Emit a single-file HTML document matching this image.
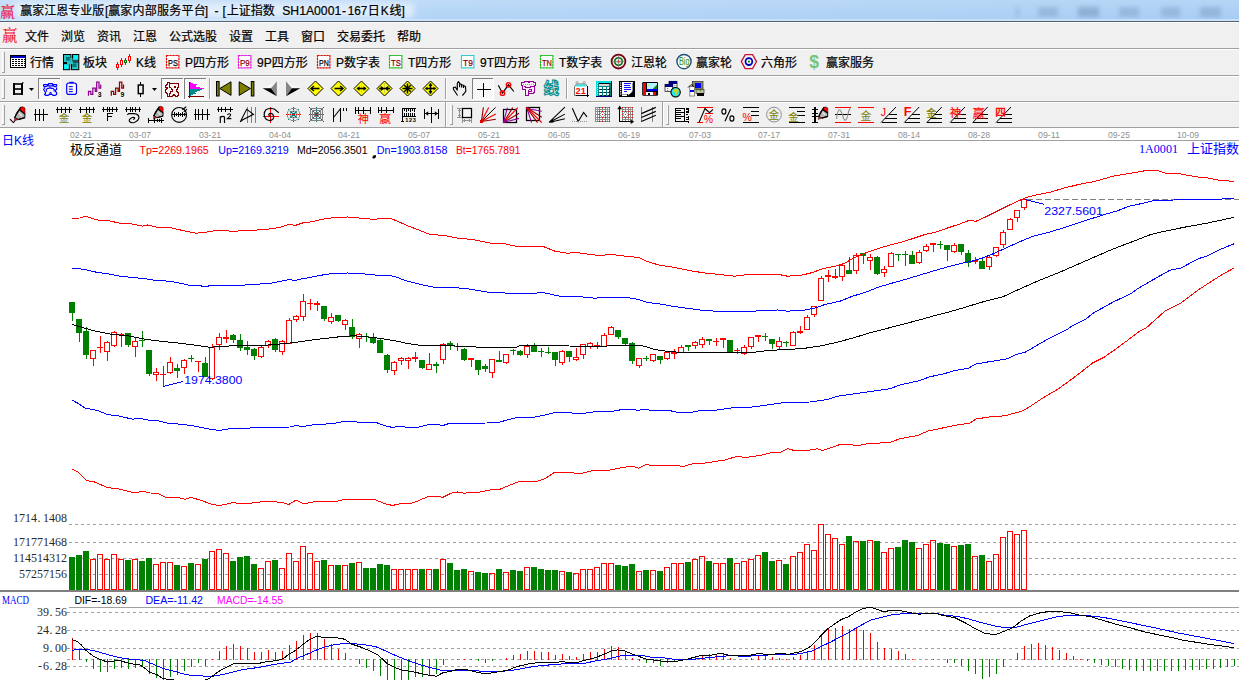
<!DOCTYPE html>
<html><head><meta charset="utf-8"><title>chart</title>
<style>html,body{margin:0;padding:0;background:#fff;overflow:hidden}svg{display:block;font-family:"Liberation Sans","Noto Sans CJK SC",sans-serif}</style></head>
<body><svg width="1239" height="680" viewBox="0 0 1239 680">
<rect x="0" y="0" width="1239" height="680" fill="#fff"/>
<defs><linearGradient id="tg" x1="0" x2="1" y1="0" y2="0"><stop offset="0" stop-color="#bcd9f7"/><stop offset="0.35" stop-color="#b1d3f6"/><stop offset="1" stop-color="#a6ccf3"/></linearGradient><linearGradient id="tv" x1="0" x2="0" y1="0" y2="1"><stop offset="0" stop-color="#fff" stop-opacity="0.18"/><stop offset="1" stop-color="#fff" stop-opacity="0"/></linearGradient><filter id="bl" x="-30%" y="-80%" width="160%" height="260%"><feGaussianBlur stdDeviation="2.1"/></filter><filter id="gl" x="-10%" y="-60%" width="120%" height="220%"><feGaussianBlur stdDeviation="3"/></filter><pattern id="dith" width="2" height="2" patternUnits="userSpaceOnUse"><rect width="2" height="2" fill="#fff"/><rect width="1" height="1" fill="#f0f0f0"/><rect x="1" y="1" width="1" height="1" fill="#f0f0f0"/></pattern></defs>
<rect x="0" y="0" width="1239" height="21" fill="url(#tg)"/>
<rect x="0" y="0" width="1239" height="21" fill="url(#tv)"/>
<rect x="14" y="3" width="400" height="15" fill="#fff" opacity="0.55" filter="url(#gl)"/>
<rect x="1015" y="7" width="5" height="10" fill="#6f8fb5" opacity="0.22" filter="url(#bl)"/>
<rect x="1038" y="7" width="20" height="10" fill="#6f8fb5" opacity="0.36" filter="url(#bl)"/>
<rect x="1078" y="7" width="21" height="10" fill="#6f8fb5" opacity="0.5" filter="url(#bl)"/>
<rect x="1119" y="7" width="20" height="10" fill="#6f8fb5" opacity="0.36" filter="url(#bl)"/>
<rect x="1161" y="7" width="19" height="10" fill="#6f8fb5" opacity="0.36" filter="url(#bl)"/>
<rect x="1200" y="7" width="21" height="10" fill="#6f8fb5" opacity="0.4" filter="url(#bl)"/>
<rect x="0" y="19" width="1239" height="2" fill="#d6e8fa" opacity="0.7"/>
<rect x="0" y="21" width="1239" height="1" fill="#55626f"/>
<rect x="0" y="22" width="1239" height="1" fill="#fbfbfb"/>
<rect x="0" y="23" width="1239" height="105" fill="#f0f0f0"/>
<rect x="0" y="48" width="1239" height="1" fill="#a0a0a0"/>
<rect x="0" y="49" width="1239" height="1" fill="#fff"/>
<rect x="0" y="75" width="1239" height="1" fill="#a0a0a0"/>
<rect x="0" y="76" width="1239" height="1" fill="#fff"/>
<rect x="0" y="101" width="1239" height="1" fill="#a0a0a0"/>
<rect x="0" y="102" width="1239" height="1" fill="#fff"/>
<rect x="0" y="127" width="1239" height="1" fill="#a0a0a0"/>
<text x="0" y="16.5" font-size="15" font-family="'Liberation Serif','Noto Serif CJK SC',serif" fill="#f0001c">赢</text>
<text x="20.14" y="15.3" font-size="12" fill="#000" stroke="#000" stroke-width="0.2">赢家江恩专业版</text>
<text x="105.03" y="15.3" font-size="12" fill="#000" stroke="#000" stroke-width="0.2">[</text>
<text x="108.14" y="15.3" font-size="12" letter-spacing="0.24" fill="#000" stroke="#000" stroke-width="0.2">赢家内部服务平台</text>
<text x="204.79" y="15.3" font-size="12" fill="#000" stroke="#000" stroke-width="0.2">]</text>
<text x="214.45" y="15.3" font-size="12" fill="#000" stroke="#000" stroke-width="0.2">-</text>
<text x="222.53" y="15.3" font-size="12" fill="#000" stroke="#000" stroke-width="0.2">[</text>
<text x="226.69" y="15.3" font-size="12" fill="#000" stroke="#000" stroke-width="0.2">上证指数</text>
<text x="282.22" y="15.3" font-size="12" fill="#000" stroke="#000" stroke-width="0.2" textLength="59" lengthAdjust="spacingAndGlyphs">SH1A0001</text>
<text x="342.05" y="15.3" font-size="12" fill="#000" stroke="#000" stroke-width="0.2">-</text>
<text x="347.84" y="15.3" font-size="12" fill="#000" stroke="#000" stroke-width="0.2" textLength="19.5" lengthAdjust="spacingAndGlyphs">167</text>
<text x="367.79" y="15.3" font-size="12" fill="#000" stroke="#000" stroke-width="0.2">日</text>
<text x="380.79" y="15.3" font-size="12" fill="#000" stroke="#000" stroke-width="0.2">K</text>
<text x="389.44" y="15.3" font-size="12" fill="#000" stroke="#000" stroke-width="0.2">线</text>
<text x="401.59" y="15.3" font-size="12" fill="#000" stroke="#000" stroke-width="0.2">]</text>
<text x="2" y="41" font-size="15.5" font-family="'Liberation Serif','Noto Serif CJK SC',serif" fill="#f0001c">赢</text>
<text x="25" y="40.8" font-size="12" fill="#000" stroke="#000" stroke-width="0.2">文件</text>
<text x="61" y="40.8" font-size="12" fill="#000" stroke="#000" stroke-width="0.2">浏览</text>
<text x="97" y="40.8" font-size="12" fill="#000" stroke="#000" stroke-width="0.2">资讯</text>
<text x="133" y="40.8" font-size="12" fill="#000" stroke="#000" stroke-width="0.2">江恩</text>
<text x="169" y="40.8" font-size="12" fill="#000" stroke="#000" stroke-width="0.2">公式选股</text>
<text x="229" y="40.8" font-size="12" fill="#000" stroke="#000" stroke-width="0.2">设置</text>
<text x="265" y="40.8" font-size="12" fill="#000" stroke="#000" stroke-width="0.2">工具</text>
<text x="301" y="40.8" font-size="12" fill="#000" stroke="#000" stroke-width="0.2">窗口</text>
<text x="337" y="40.8" font-size="12" fill="#000" stroke="#000" stroke-width="0.2">交易委托</text>
<text x="397" y="40.8" font-size="12" fill="#000" stroke="#000" stroke-width="0.2">帮助</text>
<rect x="2" y="52" width="1" height="20" fill="#fff"/><rect x="4" y="52" width="1" height="20" fill="#a0a0a0"/><rect x="2" y="72" width="3" height="1" fill="#a0a0a0"/>
<rect x="2" y="79" width="1" height="19" fill="#fff"/><rect x="4" y="79" width="1" height="19" fill="#a0a0a0"/><rect x="2" y="98" width="3" height="1" fill="#a0a0a0"/>
<rect x="2" y="105" width="1" height="19" fill="#fff"/><rect x="4" y="105" width="1" height="19" fill="#a0a0a0"/><rect x="2" y="124" width="3" height="1" fill="#a0a0a0"/>
<text x="30" y="67.3" font-size="12" fill="#000" stroke="#000" stroke-width="0.2">行情</text>
<rect x="10" y="55" width="16" height="13" fill="#000" shape-rendering="crispEdges"/><rect x="11" y="56" width="14" height="2" fill="#0000c8" shape-rendering="crispEdges"/><rect x="11" y="58" width="14" height="9" fill="#fff" shape-rendering="crispEdges"/><rect x="12" y="59" width="2" height="1" fill="#000" shape-rendering="crispEdges"/><rect x="15" y="59" width="2" height="1" fill="#000" shape-rendering="crispEdges"/><rect x="18" y="59" width="2" height="1" fill="#000" shape-rendering="crispEdges"/><rect x="21" y="59" width="2" height="1" fill="#000" shape-rendering="crispEdges"/><rect x="12" y="61" width="2" height="1" fill="#000" shape-rendering="crispEdges"/><rect x="15" y="61" width="2" height="1" fill="#000" shape-rendering="crispEdges"/><rect x="18" y="61" width="2" height="1" fill="#000" shape-rendering="crispEdges"/><rect x="21" y="61" width="2" height="1" fill="#000" shape-rendering="crispEdges"/><rect x="12" y="63" width="2" height="1" fill="#000" shape-rendering="crispEdges"/><rect x="15" y="63" width="2" height="1" fill="#000" shape-rendering="crispEdges"/><rect x="18" y="63" width="2" height="1" fill="#000" shape-rendering="crispEdges"/><rect x="21" y="63" width="2" height="1" fill="#000" shape-rendering="crispEdges"/><rect x="12" y="65" width="2" height="1" fill="#000" shape-rendering="crispEdges"/><rect x="15" y="65" width="2" height="1" fill="#000" shape-rendering="crispEdges"/><rect x="18" y="65" width="2" height="1" fill="#000" shape-rendering="crispEdges"/><rect x="21" y="65" width="2" height="1" fill="#000" shape-rendering="crispEdges"/><rect x="24" y="59" width="1" height="1" fill="#000" shape-rendering="crispEdges"/><rect x="24" y="61" width="1" height="1" fill="#000" shape-rendering="crispEdges"/><rect x="24" y="63" width="1" height="1" fill="#000" shape-rendering="crispEdges"/><rect x="24" y="65" width="1" height="1" fill="#000" shape-rendering="crispEdges"/>
<text x="83" y="67.3" font-size="12" fill="#000" stroke="#000" stroke-width="0.2">板块</text>
<rect x="63.5" y="54.5" width="7.5" height="8" fill="#28c4c8" stroke="#000" stroke-width="1"/><rect x="66" y="57" width="3.8" height="3.6" fill="#007878" /><rect x="72.5" y="54.5" width="6.3" height="6.5" fill="#28c4c8" stroke="#000" stroke-width="1"/><rect x="74.2" y="55.3" width="3.8" height="3.5" fill="#00ffff" /><rect x="63.5" y="63.5" width="6.3" height="6.2" fill="#28c4c8" stroke="#000" stroke-width="1"/><rect x="64.3" y="65" width="3.8" height="3.9" fill="#00ffff" /><rect x="71.5" y="62" width="7.3" height="7.7" fill="#28c4c8" stroke="#000" stroke-width="1"/><rect x="72.2" y="63.3" width="4.2" height="3.8" fill="#007878" /><rect x="70.3" y="58" width="2.2" height="5" fill="#28c4c8" /><rect x="67" y="61.6" width="6" height="2.6" fill="#28c4c8" />
<text x="136" y="67.3" font-size="12" fill="#000" stroke="#000" stroke-width="0.2">K线</text>
<rect x="117" y="62" width="1" height="8" fill="#ff0000" shape-rendering="crispEdges"/><rect x="116.5" y="64.5" width="2" height="3" fill="#fff" stroke="#ff0000" shape-rendering="crispEdges"/><rect x="121" y="58" width="1" height="9" fill="#ff0000" shape-rendering="crispEdges"/><rect x="120.5" y="60.5" width="2" height="4" fill="#fff" stroke="#ff0000" shape-rendering="crispEdges"/><rect x="125" y="58" width="1" height="7" fill="#008000" shape-rendering="crispEdges"/><rect x="124.5" y="60.5" width="2" height="2" fill="#fff" stroke="#008000" shape-rendering="crispEdges"/><rect x="129" y="54" width="1" height="9" fill="#ff0000" shape-rendering="crispEdges"/><rect x="128.5" y="56.5" width="2" height="4" fill="#fff" stroke="#ff0000" shape-rendering="crispEdges"/>
<text x="185" y="67.3" font-size="12" fill="#000" stroke="#000" stroke-width="0.2">P四方形</text>
<rect x="166" y="55" width="13.4" height="13.4" fill="#fff" /><rect x="166.5" y="55.5" width="12.4" height="12.4" fill="none" stroke="#ff0000" stroke-width="1.2" stroke-dasharray="2.2,0.8"/><rect x="166.5" y="55.5" width="12.4" height="12.4" fill="none" stroke="#202020" stroke-width="1" stroke-dasharray="0.8,2.2" stroke-dashoffset="-2.2" opacity="0.55"/><text x="172.89999999999998" y="65.5" font-size="9.5" text-anchor="middle" fill="#000" stroke="#000" stroke-width="0.25" textLength="9.8" lengthAdjust="spacingAndGlyphs">PS</text>
<text x="257" y="67.3" font-size="12" fill="#000" stroke="#000" stroke-width="0.2">9P四方形</text>
<rect x="238" y="55" width="13.4" height="13.4" fill="#fff" /><rect x="238.5" y="55.5" width="12.4" height="12.4" fill="none" stroke="#ff00ff" stroke-width="1.2" stroke-dasharray="2.2,0.8"/><rect x="238.5" y="55.5" width="12.4" height="12.4" fill="none" stroke="#202020" stroke-width="1" stroke-dasharray="0.8,2.2" stroke-dashoffset="-2.2" opacity="0.55"/><text x="244.89999999999998" y="65.5" font-size="9.5" text-anchor="middle" fill="#900000" stroke="#900000" stroke-width="0.25" textLength="9.8" lengthAdjust="spacingAndGlyphs">P9</text>
<text x="336" y="67.3" font-size="12" fill="#000" stroke="#000" stroke-width="0.2">P数字表</text>
<rect x="317" y="55" width="13.4" height="13.4" fill="#fff" /><rect x="317.5" y="55.5" width="12.4" height="12.4" fill="none" stroke="#ff0000" stroke-width="1.2" stroke-dasharray="2.2,0.8"/><rect x="317.5" y="55.5" width="12.4" height="12.4" fill="none" stroke="#202020" stroke-width="1" stroke-dasharray="0.8,2.2" stroke-dashoffset="-2.2" opacity="0.55"/><text x="323.9" y="65.5" font-size="9.5" text-anchor="middle" fill="#000" stroke="#000" stroke-width="0.25" textLength="9.8" lengthAdjust="spacingAndGlyphs">PN</text>
<text x="408" y="67.3" font-size="12" fill="#000" stroke="#000" stroke-width="0.2">T四方形</text>
<rect x="389" y="55" width="13.4" height="13.4" fill="#fff" /><rect x="389.5" y="55.5" width="12.4" height="12.4" fill="none" stroke="#00d000" stroke-width="1.2" stroke-dasharray="2.2,0.8"/><rect x="389.5" y="55.5" width="12.4" height="12.4" fill="none" stroke="#202020" stroke-width="1" stroke-dasharray="0.8,2.2" stroke-dashoffset="-2.2" opacity="0.55"/><text x="395.9" y="65.5" font-size="9.5" text-anchor="middle" fill="#900000" stroke="#900000" stroke-width="0.25" textLength="9.8" lengthAdjust="spacingAndGlyphs">TS</text>
<text x="480" y="67.3" font-size="12" fill="#000" stroke="#000" stroke-width="0.2">9T四方形</text>
<rect x="461" y="55" width="13.4" height="13.4" fill="#fff" /><rect x="461.5" y="55.5" width="12.4" height="12.4" fill="none" stroke="#00e0e0" stroke-width="1.2" stroke-dasharray="2.2,0.8"/><rect x="461.5" y="55.5" width="12.4" height="12.4" fill="none" stroke="#202020" stroke-width="1" stroke-dasharray="0.8,2.2" stroke-dashoffset="-2.2" opacity="0.55"/><text x="467.9" y="65.5" font-size="9.5" text-anchor="middle" fill="#900000" stroke="#900000" stroke-width="0.25" textLength="9.8" lengthAdjust="spacingAndGlyphs">T9</text>
<text x="559" y="67.3" font-size="12" fill="#000" stroke="#000" stroke-width="0.2">T数字表</text>
<rect x="540" y="55" width="13.4" height="13.4" fill="#fff" /><rect x="540.5" y="55.5" width="12.4" height="12.4" fill="none" stroke="#00d000" stroke-width="1.2" stroke-dasharray="2.2,0.8"/><rect x="540.5" y="55.5" width="12.4" height="12.4" fill="none" stroke="#202020" stroke-width="1" stroke-dasharray="0.8,2.2" stroke-dashoffset="-2.2" opacity="0.55"/><text x="546.9000000000001" y="65.5" font-size="9.5" text-anchor="middle" fill="#900000" stroke="#900000" stroke-width="0.25" textLength="9.8" lengthAdjust="spacingAndGlyphs">TN</text>
<text x="631" y="67.3" font-size="12" fill="#000" stroke="#000" stroke-width="0.2">江恩轮</text>
<circle cx="618.5" cy="61.6" r="6.9" stroke="#7a0018" fill="#f0f0f0" stroke-width="1.8" /><circle cx="618.5" cy="61.6" r="3.8" stroke="#007000" fill="#e8e8e8" stroke-width="1.6" /><line x1="612" y1="61.6" x2="625" y2="61.6" stroke="#808080" stroke-width="0.8" /><line x1="618.5" y1="55" x2="618.5" y2="68" stroke="#808080" stroke-width="0.8" /><circle cx="618.5" cy="61.6" r="1.2" stroke="none" fill="#e04040" stroke-width="1" />
<text x="696" y="67.3" font-size="12" fill="#000" stroke="#000" stroke-width="0.2">赢家轮</text>
<circle cx="684" cy="61.6" r="7.1" stroke="#1f4e79" fill="#fff" stroke-width="1.4" /><text x="684.2" y="65.4" font-size="11.5" text-anchor="middle" fill="#209020" textLength="10.6" lengthAdjust="spacingAndGlyphs">Big</text>
<text x="761" y="67.3" font-size="12" fill="#000" stroke="#000" stroke-width="0.2">六角形</text>
<polygon points="741.3,61.6 745.2,54.6 752.6,54.6 756.5,61.6 752.6,68.6 745.2,68.6" fill="#f4f4f4" stroke="#c8102e" stroke-width="1.3" /><circle cx="748.9" cy="61.6" r="3.4" stroke="#0000c0" fill="#fff" stroke-width="1.8" /><circle cx="748.9" cy="61.6" r="1.1" stroke="none" fill="#008000" stroke-width="1" />
<text x="826" y="67.3" font-size="12" fill="#000" stroke="#000" stroke-width="0.2">赢家服务</text>
<text x="814" y="68.3" font-size="17.5" font-weight="bold" text-anchor="middle" fill="#78c478">$</text>
<rect x="13" y="83" width="2" height="12" fill="#000" shape-rendering="crispEdges"/><rect x="21" y="83" width="2" height="12" fill="#000" shape-rendering="crispEdges"/><rect x="13" y="83.2" width="10" height="1.6" fill="#000" /><rect x="13" y="88.2" width="10" height="1.6" fill="#000" /><rect x="13" y="93.2" width="10" height="1.6" fill="#000" /><rect x="22" y="82.3" width="1.6" height="1" fill="#000" /><polygon points="29,88 34,88 31.5,91" fill="#000" stroke="none" stroke-width="1" /><rect x="38" y="78" width="23" height="22" fill="url(#dith)" shape-rendering="crispEdges"/><rect x="38" y="78" width="23" height="1" fill="#808080" shape-rendering="crispEdges"/><rect x="38" y="78" width="1" height="22" fill="#808080" shape-rendering="crispEdges"/><rect x="38" y="99" width="23" height="1" fill="#fff" shape-rendering="crispEdges"/><rect x="60" y="78" width="1" height="22" fill="#fff" shape-rendering="crispEdges"/><path d="M43.6,86.6 V84.6 H48.5 V83.6 H52.5 V84.6 H56.6 V86.6 M43.6,86.6 H46 L47.5,85.8 H53 L54.5,86.6 H56.6 M45,87.6 L43.6,89.5 L45.5,92.5 V93.5 L44.5,94.5 L46,95.4 H48.2 L49.2,94.4 H52 L53,95.4 H55 L56.6,94.4 V92.5 L55.5,91.5 V90 L56.6,89.4 V87.6 M46.6,91.6 L46.2,89.6 L47.6,88.3 H49 L50,87.3 L51,88.3 H53 L54.2,89.6 V91.6 M49.4,93.4 L50.5,92.4 L51.6,93.4" fill="none" stroke="#0000ff" stroke-width="1.15" stroke-linejoin="round"/><rect x="66.7" y="83" width="9.8" height="11.4" rx="2.2" fill="#fffff0" stroke="#0000ff" stroke-width="1.2"/><rect x="69.3" y="81.8" width="4.5" height="1.6" fill="#0000ff" /><line x1="68.8" y1="86.6" x2="72.8" y2="86.6" stroke="#0000ff" stroke-width="1.1" /><line x1="68.8" y1="89.2" x2="72.8" y2="89.2" stroke="#0000ff" stroke-width="1.1" /><line x1="68.8" y1="91.6" x2="72.8" y2="91.6" stroke="#0000ff" stroke-width="1.1" /><polyline points="88.5,95.7 88.5,91.3 90.8,91.3 90.8,94.4 92.8,94.4 92.8,88.1 95.3,88.1 95.3,91.3 96.7,91.3 96.7,82.2 99.0,82.2 99.0,88.1 100.7,88.1 100.7,84.5" stroke="#900090" fill="none" stroke-width="1.25" /><text x="97.7" y="96.7" font-size="6.5" fill="#000" font-weight="bold" textLength="3.8" lengthAdjust="spacingAndGlyphs">3</text><polyline points="111.3,95.7 111.3,91.3 113.6,91.3 113.6,94.4 115.6,94.4 115.6,88.1 118.1,88.1 118.1,91.3 119.5,91.3 119.5,82.2 121.8,82.2 121.8,88.1 123.5,88.1 123.5,84.5" stroke="#900000" fill="none" stroke-width="1.25" /><text x="120.5" y="96.7" font-size="6.5" fill="#000" font-weight="bold" textLength="3.8" lengthAdjust="spacingAndGlyphs">9</text><rect x="140" y="82" width="1.3" height="14.5" fill="#000" shape-rendering="crispEdges"/><rect x="138.3" y="85" width="4.8" height="8.6" fill="#f0f0f0" stroke="#000" stroke-width="1.5"/><polygon points="152,88 157,88 154.5,91" fill="#000" stroke="none" stroke-width="1" /><rect x="161" y="78" width="23" height="22" fill="url(#dith)" shape-rendering="crispEdges"/><rect x="161" y="78" width="23" height="1" fill="#808080" shape-rendering="crispEdges"/><rect x="161" y="78" width="1" height="22" fill="#808080" shape-rendering="crispEdges"/><rect x="161" y="99" width="23" height="1" fill="#fff" shape-rendering="crispEdges"/><rect x="183" y="78" width="1" height="22" fill="#fff" shape-rendering="crispEdges"/><path d="M167.5,82.5 H169.5 V83.5 H178.5 V87.5 H177.5 V89.5 H176.5 V91.5 H177.5 V92.5 H178.5 V95.5 H177.5 V96.5 H175.5 V95.5 H174.5 V94.5 H173.5 V95.5 H172.5 V96.5 H167.5 V93.5 H166.5 V92.5 H165.5 V89.5 H166.5 V88.5 H167.5 V87.5 H165.5 V85.5 H166.5 V84.5 H167.5 Z" fill="none" stroke="#800000" stroke-width="1.1" shape-rendering="crispEdges"/><path d="M169.5,83.5 V87.5 H170.5 M170.5,88.5 H171.5 V89.5 H172.5 V91.5 H170.5 V93.5 H169.5 V95.5" fill="none" stroke="#800000" stroke-width="1.1" shape-rendering="crispEdges"/><rect x="174" y="86" width="2" height="2" fill="#800000" shape-rendering="crispEdges"/><rect x="184" y="78" width="23" height="22" fill="url(#dith)" shape-rendering="crispEdges"/><rect x="184" y="78" width="23" height="1" fill="#808080" shape-rendering="crispEdges"/><rect x="184" y="78" width="1" height="22" fill="#808080" shape-rendering="crispEdges"/><rect x="184" y="99" width="23" height="1" fill="#fff" shape-rendering="crispEdges"/><rect x="206" y="78" width="1" height="22" fill="#fff" shape-rendering="crispEdges"/><rect x="189" y="82" width="1" height="16" fill="#800000" shape-rendering="crispEdges"/><rect x="188" y="96" width="16" height="1" fill="#800000" shape-rendering="crispEdges"/><rect x="190" y="82" width="1" height="1" fill="#ff00ff" shape-rendering="crispEdges"/><rect x="190" y="83" width="3" height="1" fill="#ff00ff" shape-rendering="crispEdges"/><rect x="190" y="84" width="7" height="1" fill="#ff00ff" shape-rendering="crispEdges"/><rect x="190" y="85" width="6" height="1" fill="#ff00ff" shape-rendering="crispEdges"/><rect x="190" y="86" width="6" height="1" fill="#ff00ff" shape-rendering="crispEdges"/><rect x="190" y="87" width="10" height="1" fill="#ff00ff" shape-rendering="crispEdges"/><rect x="190" y="88" width="14" height="1" fill="#ff00ff" shape-rendering="crispEdges"/><rect x="190" y="89" width="12" height="1" fill="#008c8c" shape-rendering="crispEdges"/><rect x="190" y="90" width="10" height="1" fill="#008c8c" shape-rendering="crispEdges"/><rect x="190" y="91" width="7" height="1" fill="#008c8c" shape-rendering="crispEdges"/><rect x="190" y="92" width="5" height="1" fill="#008c8c" shape-rendering="crispEdges"/><rect x="190" y="93" width="6" height="1" fill="#008c8c" shape-rendering="crispEdges"/><rect x="190" y="94" width="3" height="1" fill="#008c8c" shape-rendering="crispEdges"/><rect x="190" y="95" width="1" height="1" fill="#008c8c" shape-rendering="crispEdges"/><rect x="209" y="78" width="1" height="21" fill="#a0a0a0" shape-rendering="crispEdges"/><rect x="210" y="78" width="1" height="21" fill="#fff" shape-rendering="crispEdges"/><rect x="216.5" y="81.5" width="2.6" height="14.5" fill="#808000" stroke="#000" stroke-width="1"/><polygon points="219.8,88.5 231,81.8 231,95.4" fill="#808000" stroke="#000" stroke-width="1" /><polygon points="239.2,81.8 239.2,95.4 250.4,88.5" fill="#808000" stroke="#000" stroke-width="1" /><rect x="251.3" y="81.5" width="2.6" height="14.5" fill="#808000" stroke="#000" stroke-width="1"/><polygon points="262.8,88.3 276.9,81.2 271,88.3" fill="#f8f8f8" stroke="none" stroke-width="1" /><polygon points="271,88.3 276.9,81.2 276.9,96" fill="#868686" stroke="none" stroke-width="1" /><polygon points="262.6,88.3 271,88.3 276.9,96.2" fill="#000" stroke="none" stroke-width="1" /><polygon points="300.1,88.3 286,81.2 291.9,88.3" fill="#f8f8f8" stroke="none" stroke-width="1" /><polygon points="291.9,88.3 286,81.2 286,96" fill="#868686" stroke="none" stroke-width="1" /><polygon points="300.3,88.3 291.9,88.3 286,96.2" fill="#000" stroke="none" stroke-width="1" /><polygon points="308.0,88.5 315.5,81.0 323.0,88.5 315.5,96.0" fill="#ffff00" stroke="#000" stroke-width="1" /><line x1="311.5" y1="88.5" x2="319.5" y2="88.5" stroke="#000" stroke-width="1.6" /><polyline points="314.0,86.0 311.0,88.5 314.0,91.0" stroke="#000" fill="none" stroke-width="1.4" /><polygon points="331.0,88.5 338.5,81.0 346.0,88.5 338.5,96.0" fill="#ffff00" stroke="#000" stroke-width="1" /><line x1="334.5" y1="88.5" x2="342.5" y2="88.5" stroke="#000" stroke-width="1.6" /><polyline points="340.0,86.0 343.0,88.5 340.0,91.0" stroke="#000" fill="none" stroke-width="1.4" /><polygon points="354.0,88.5 361.5,81.0 369.0,88.5 361.5,96.0" fill="#ffff00" stroke="#000" stroke-width="1" /><line x1="361.5" y1="83.5" x2="361.5" y2="93.5" stroke="#a0a0a0" stroke-width="1" stroke-dasharray="1,1"/><line x1="357.5" y1="88.5" x2="365.5" y2="88.5" stroke="#000" stroke-width="1.6" /><polygon points="356.5,88.5 359.5,86.3 359.5,90.7" fill="#000" stroke="none" stroke-width="1" /><polygon points="366.5,88.5 363.5,86.3 363.5,90.7" fill="#000" stroke="none" stroke-width="1" /><polygon points="377.0,88.5 384.5,81.0 392.0,88.5 384.5,96.0" fill="#ffff00" stroke="#000" stroke-width="1" /><line x1="384.5" y1="83.5" x2="384.5" y2="93.5" stroke="#a0a0a0" stroke-width="1" stroke-dasharray="1,1"/><line x1="379.0" y1="88.5" x2="390.0" y2="88.5" stroke="#000" stroke-width="1.5" /><polygon points="384.2,88.5 380.7,85.7 380.7,91.3" fill="#000" stroke="none" stroke-width="1" /><polygon points="384.8,88.5 388.3,85.7 388.3,91.3" fill="#000" stroke="none" stroke-width="1" /><polygon points="400.0,88.5 407.5,81.0 415.0,88.5 407.5,96.0" fill="#ffff00" stroke="#000" stroke-width="1" /><line x1="402.5" y1="88.5" x2="412.5" y2="88.5" stroke="#000" stroke-width="1.5" /><line x1="407.5" y1="83.5" x2="407.5" y2="93.5" stroke="#000" stroke-width="1.5" /><line x1="404.3" y1="85.3" x2="410.7" y2="91.7" stroke="#000" stroke-width="1.5" /><line x1="404.3" y1="91.7" x2="410.7" y2="85.3" stroke="#000" stroke-width="1.5" /><polygon points="423.0,88.5 430.5,81.0 438.0,88.5 430.5,96.0" fill="#ffff00" stroke="#000" stroke-width="1" /><line x1="425.5" y1="88.5" x2="435.5" y2="88.5" stroke="#000" stroke-width="1.5" /><line x1="430.5" y1="83.5" x2="430.5" y2="93.5" stroke="#000" stroke-width="1.6" /><polygon points="430.5,83.0 428.5,86.0 432.5,86.0" fill="#000" stroke="none" stroke-width="1" /><polygon points="430.5,94.0 428.5,91.0 432.5,91.0" fill="#000" stroke="none" stroke-width="1" /><polygon points="425.0,88.5 427.5,86.7 427.5,90.3" fill="#000" stroke="none" stroke-width="1" /><polygon points="436.0,88.5 433.5,86.7 433.5,90.3" fill="#000" stroke="none" stroke-width="1" /><rect x="445" y="78" width="1" height="21" fill="#a0a0a0" shape-rendering="crispEdges"/><rect x="446" y="78" width="1" height="21" fill="#fff" shape-rendering="crispEdges"/><path d="M457.6,95.5 L453.4,89.3 L453.4,87.6 L455.3,87 L457.3,90.1 L457.3,83.3 L458.5,81.5 L459.6,83.3 L459.6,87.3 M459.6,83.6 L461.6,84.6 L461.6,87.4 M461.6,84.8 L463.5,85.2 L463.5,88 M463.5,85.5 L465.5,86.6 L465.8,91.3 L464.4,93.2 L462.4,95.5" fill="none" stroke="#000" stroke-width="1.15" stroke-linejoin="round"/><rect x="472" y="78" width="22" height="22" fill="url(#dith)" shape-rendering="crispEdges"/><rect x="472" y="78" width="22" height="1" fill="#808080" shape-rendering="crispEdges"/><rect x="472" y="78" width="1" height="22" fill="#808080" shape-rendering="crispEdges"/><rect x="472" y="99" width="22" height="1" fill="#fff" shape-rendering="crispEdges"/><rect x="493" y="78" width="1" height="22" fill="#fff" shape-rendering="crispEdges"/><rect x="477" y="88.5" width="14" height="1.3" fill="#000" shape-rendering="crispEdges"/><rect x="483" y="83" width="1.3" height="14" fill="#000" shape-rendering="crispEdges"/><polyline points="498.3,85.3 502.5,93.2 508.5,84.8 513.8,91.5" stroke="#000" fill="none" stroke-width="1.15" /><circle cx="502.5" cy="93.2" r="2.2" stroke="#ff0000" fill="none" stroke-width="1.4" /><circle cx="508.5" cy="84.8" r="2.2" stroke="#ff0000" fill="none" stroke-width="1.4" /><path d="M521.5,82.5 H524.5 V81.5 H528.5 V82.5 H529.5 V81.5 H533.5 V82.5 H535.5 V85.5 H534.5 V92.5 H533.5 V93.5 H528.5 V95.5 H525.5 V89.5 H522.5 V85.5 H521.5 Z" fill="#f4f0f4" stroke="#98009a" stroke-width="1.1" shape-rendering="crispEdges"/><path d="M523.5,86.5 H525.5 V87.5 H530.5 V86.5 H533.5 M528.5,89.5 H531.5 V91.5 H528.5 M528.5,89.5 V93.5" fill="none" stroke="#98009a" stroke-width="1" shape-rendering="crispEdges"/><path d="M522.5,84.5 H535" fill="none" stroke="#98009a" stroke-width="1" stroke-dasharray="1,1" opacity="0.45" shape-rendering="crispEdges"/><text x="543.6" y="94.4" font-size="15.6" font-weight="bold" fill="#f0f0f0" stroke="#008a8a" stroke-width="0.97">线</text><rect x="566" y="78" width="1" height="21" fill="#a0a0a0" shape-rendering="crispEdges"/><rect x="567" y="78" width="1" height="21" fill="#fff" shape-rendering="crispEdges"/><polygon points="574.5,86.5 576.5,84 585.5,84 587.5,86.5 587.5,95.5 574.5,95.5" fill="#fff" stroke="#707070" stroke-width="1" /><polygon points="575.2,86.4 577,84.2 585,84.2 586.8,86.4" fill="#40e0e0" stroke="none" stroke-width="1" /><rect x="587" y="86" width="1.3" height="10.6" fill="#000" shape-rendering="crispEdges"/><rect x="575.5" y="95" width="13" height="1.4" fill="#000" shape-rendering="crispEdges"/><circle cx="577" cy="82.6" r="1.1" stroke="#909090" fill="none" stroke-width="0.8" /><circle cx="584.3" cy="82.6" r="1.1" stroke="#909090" fill="none" stroke-width="0.8" /><text x="580.7" y="94" font-size="9.8" font-weight="bold" text-anchor="middle" fill="#ff0000" textLength="10.2" lengthAdjust="spacingAndGlyphs">21</text><rect x="596" y="81" width="16" height="16" fill="#000080" shape-rendering="crispEdges"/><rect x="596" y="81" width="14.6" height="14.6" fill="#00e0e0" shape-rendering="crispEdges"/><rect x="598" y="83" width="12.6" height="12.6" fill="#008080" shape-rendering="crispEdges"/><rect x="597" y="83" width="1" height="1" fill="#fff" shape-rendering="crispEdges"/><rect x="597" y="85" width="1" height="1" fill="#fff" shape-rendering="crispEdges"/><rect x="597" y="87" width="1" height="1" fill="#fff" shape-rendering="crispEdges"/><rect x="597" y="89" width="1" height="1" fill="#fff" shape-rendering="crispEdges"/><rect x="597" y="91" width="1" height="1" fill="#fff" shape-rendering="crispEdges"/><rect x="597" y="93" width="1" height="1" fill="#fff" shape-rendering="crispEdges"/><rect x="599" y="83" width="10.5" height="1" fill="#000" shape-rendering="crispEdges"/><rect x="599" y="84" width="10" height="2.3" fill="#d4d4d4" shape-rendering="crispEdges"/><rect x="600.0" y="88.2" width="2.2" height="1.3" fill="#002030" shape-rendering="crispEdges"/><rect x="599.3" y="87.4" width="2.2" height="1.3" fill="#fff" shape-rendering="crispEdges"/><rect x="604.0" y="88.2" width="2.2" height="1.3" fill="#002030" shape-rendering="crispEdges"/><rect x="603.3" y="87.4" width="2.2" height="1.3" fill="#fff" shape-rendering="crispEdges"/><rect x="607.7" y="88.2" width="2.2" height="1.3" fill="#002030" shape-rendering="crispEdges"/><rect x="607" y="87.4" width="2.2" height="1.3" fill="#fff" shape-rendering="crispEdges"/><rect x="600.0" y="91.2" width="2.2" height="1.3" fill="#002030" shape-rendering="crispEdges"/><rect x="599.3" y="90.4" width="2.2" height="1.3" fill="#fff" shape-rendering="crispEdges"/><rect x="604.0" y="91.2" width="2.2" height="1.3" fill="#002030" shape-rendering="crispEdges"/><rect x="603.3" y="90.4" width="2.2" height="1.3" fill="#fff" shape-rendering="crispEdges"/><rect x="607.7" y="91.2" width="2.2" height="1.3" fill="#002030" shape-rendering="crispEdges"/><rect x="607" y="90.4" width="2.2" height="1.3" fill="#fff" shape-rendering="crispEdges"/><rect x="600.0" y="94.2" width="2.2" height="1.3" fill="#002030" shape-rendering="crispEdges"/><rect x="599.3" y="93.4" width="2.2" height="1.3" fill="#fff" shape-rendering="crispEdges"/><rect x="604.0" y="94.2" width="2.2" height="1.3" fill="#002030" shape-rendering="crispEdges"/><rect x="603.3" y="93.4" width="2.2" height="1.3" fill="#fff" shape-rendering="crispEdges"/><rect x="607.7" y="94.2" width="2.2" height="1.3" fill="#002030" shape-rendering="crispEdges"/><rect x="607" y="93.4" width="2.2" height="1.3" fill="#fff" shape-rendering="crispEdges"/><rect x="619" y="81" width="16" height="16" fill="#000" shape-rendering="crispEdges"/><rect x="622" y="82" width="11" height="12.4" fill="#fff" shape-rendering="crispEdges"/><polygon points="622,94.4 627,94.4 627,96 622,96" fill="#fff" stroke="none" stroke-width="1" /><polygon points="627.4,96 633,90.6 633,96" fill="#000" stroke="none" stroke-width="1" /><polygon points="628,95.6 632.4,91.4 628.6,92" fill="#fff" stroke="none" stroke-width="1" /><circle cx="620.7" cy="83.0" r="0.75" stroke="none" fill="#fff" stroke-width="1" /><circle cx="620.7" cy="85.2" r="0.75" stroke="none" fill="#fff" stroke-width="1" /><circle cx="620.7" cy="87.4" r="0.75" stroke="none" fill="#fff" stroke-width="1" /><circle cx="620.7" cy="89.60000000000001" r="0.75" stroke="none" fill="#fff" stroke-width="1" /><circle cx="620.7" cy="91.80000000000001" r="0.75" stroke="none" fill="#fff" stroke-width="1" /><circle cx="620.7" cy="94.0" r="0.75" stroke="none" fill="#fff" stroke-width="1" /><rect x="623.5" y="83" width="7.5" height="1" fill="#1010ff" shape-rendering="crispEdges"/><rect x="623.5" y="85.2" width="6.5" height="1" fill="#1010ff" shape-rendering="crispEdges"/><rect x="623.5" y="87.2" width="7.5" height="1" fill="#1010ff" shape-rendering="crispEdges"/><rect x="623.5" y="89.2" width="7.5" height="1" fill="#1010ff" shape-rendering="crispEdges"/><rect x="623.5" y="91.2" width="3.5" height="1" fill="#1010ff" shape-rendering="crispEdges"/><rect x="632.4" y="83" width="0.8" height="8" fill="#909090" shape-rendering="crispEdges"/><rect x="642.2" y="82" width="15.8" height="13.8" rx="1.2" fill="#000"/><rect x="643.2" y="83" width="2.4" height="11.6" fill="#ff0000" shape-rendering="crispEdges"/><rect x="646.8" y="83" width="10.4" height="6" fill="#b0f4ff" shape-rendering="crispEdges"/><rect x="646.8" y="89" width="10.4" height="2" fill="#0000ff" shape-rendering="crispEdges"/><polygon points="652.6,89 657.2,84.6 657.2,89" fill="#108020" stroke="none" stroke-width="1" /><rect x="648" y="85" width="1.6" height="1.4" fill="#f0e020" shape-rendering="crispEdges"/><rect x="645.6" y="92.2" width="10.6" height="2.6" fill="#ff0000" shape-rendering="crispEdges"/><rect x="646.4" y="92.2" width="6.2" height="2.6" fill="#fff" shape-rendering="crispEdges"/><rect x="648.4" y="93" width="2" height="1.8" fill="#000" shape-rendering="crispEdges"/><rect x="669" y="81.3" width="8" height="6.4" fill="#fff" stroke="#000" stroke-width="0.7"/><rect x="669" y="81.3" width="8" height="2.2" fill="#000080" shape-rendering="crispEdges"/><rect x="665" y="84.3" width="7.8" height="7" fill="#fff" stroke="#000" stroke-width="0.7"/><rect x="665" y="84.3" width="7.8" height="2.2" fill="#000080" shape-rendering="crispEdges"/><rect x="667" y="88" width="1.2" height="1.2" fill="#808080" /><rect x="667" y="90" width="1.2" height="1.2" fill="#808080" /><rect x="674.3" y="84.8" width="1.2" height="1.6" fill="#808080" /><circle cx="675.6" cy="92.2" r="4.7" stroke="#000" fill="#20e8f0" stroke-width="1.1" /><polygon points="673.8,89.6 677.6,88.8 678.8,91 677,92.6 676.6,95.4 675,95 675.2,92.4 673.2,91.4" fill="#d8d010" stroke="none" stroke-width="1" /><rect x="692.4" y="81.6" width="10.6" height="7.6" fill="#8c8c68" stroke="#303020" stroke-width="0.7"/><rect x="694.5" y="83.4" width="6.6" height="4.2" fill="#0000ff" shape-rendering="crispEdges"/><rect x="696" y="89.4" width="8" height="4" fill="#c4c4a4" stroke="#303020" stroke-width="0.7"/><rect x="697" y="93.2" width="7.2" height="2.6" fill="#000" shape-rendering="crispEdges"/><rect x="699.6" y="90.3" width="1.6" height="0.9" fill="#108020" /><rect x="689.8" y="86.4" width="4.6" height="9.6" fill="#fff" stroke="#707060" stroke-width="0.8"/><rect x="690.2" y="89.6" width="3.9" height="2.5" fill="#0000e0" shape-rendering="crispEdges"/><polyline points="688,87.6 691,84.6 694,86.6" stroke="#000" fill="none" stroke-width="0.9" />
<polygon points="19.1,109.5 16.7,112.5 14.7,117.7 18.3,119.4 24.8,117.7 25.0,114.1" fill="#b4b4b4" stroke="#000" stroke-width="0.9" /><polygon points="19.1,109.5 21.1,107.0 22.8,106.8 25.0,108.1 25.0,114.1" fill="#ff0000" stroke="#000" stroke-width="0.5" /><line x1="20.8" y1="107.0" x2="14.4" y2="118.0" stroke="#000" stroke-width="1.2" /><line x1="19.1" y1="109.5" x2="25.0" y2="114.1" stroke="#000" stroke-width="1.1" /><line x1="25.0" y1="117.6" x2="18.3" y2="119.6" stroke="#000" stroke-width="1.2" /><polygon points="14.7,117.7 18.1,119.4 14.2,121.2" fill="#ff1010" stroke="#000" stroke-width="0.4" /><line x1="19.0" y1="113.0" x2="22.0" y2="116.0" stroke="#e8e8e8" stroke-width="1.2" /><polyline points="10,119.2 13.3,122.6 14.8,121.2" stroke="#000" fill="none" stroke-width="1.1" /><rect x="35" y="109" width="1" height="12" fill="#000" shape-rendering="crispEdges"/><rect x="39" y="109" width="1" height="12" fill="#000" shape-rendering="crispEdges"/><rect x="43" y="109" width="1" height="12" fill="#000" shape-rendering="crispEdges"/><rect x="34" y="114" width="14" height="1" fill="#000" shape-rendering="crispEdges"/><rect x="56" y="109" width="16" height="1" fill="#000" shape-rendering="crispEdges"/><rect x="57" y="107" width="1" height="6" fill="#000" shape-rendering="crispEdges"/><rect x="61" y="107" width="1" height="6" fill="#000" shape-rendering="crispEdges"/><rect x="65" y="107" width="1" height="6" fill="#000" shape-rendering="crispEdges"/><rect x="69" y="107" width="1" height="6" fill="#000" shape-rendering="crispEdges"/><text x="58.78" y="121.7" font-size="10.6" fill="#808000">金</text><rect x="79" y="109" width="16" height="1" fill="#000" shape-rendering="crispEdges"/><rect x="80" y="107" width="1" height="6" fill="#000" shape-rendering="crispEdges"/><rect x="86" y="107" width="1" height="6" fill="#000" shape-rendering="crispEdges"/><rect x="89" y="107" width="1" height="6" fill="#000" shape-rendering="crispEdges"/><rect x="93" y="107" width="1" height="6" fill="#000" shape-rendering="crispEdges"/><text x="81.78" y="121.7" font-size="10.6" fill="#808000">金</text><rect x="102" y="109" width="16" height="1" fill="#000" shape-rendering="crispEdges"/><rect x="103" y="107" width="1" height="5" fill="#000" shape-rendering="crispEdges"/><rect x="107" y="107" width="1" height="5" fill="#000" shape-rendering="crispEdges"/><rect x="109" y="107" width="1" height="5" fill="#000" shape-rendering="crispEdges"/><rect x="112" y="107" width="1" height="5" fill="#000" shape-rendering="crispEdges"/><rect x="116" y="107" width="1" height="5" fill="#000" shape-rendering="crispEdges"/><rect x="107" y="113" width="1" height="8" fill="#000" shape-rendering="crispEdges"/><rect x="107" y="113" width="6" height="1" fill="#000" shape-rendering="crispEdges"/><rect x="107" y="116" width="5" height="1" fill="#000" shape-rendering="crispEdges"/><rect x="125" y="109" width="16" height="1" fill="#000" shape-rendering="crispEdges"/><rect x="126" y="107" width="1" height="5" fill="#000" shape-rendering="crispEdges"/><rect x="130" y="107" width="1" height="5" fill="#000" shape-rendering="crispEdges"/><rect x="132" y="107" width="1" height="5" fill="#000" shape-rendering="crispEdges"/><rect x="135" y="107" width="1" height="5" fill="#000" shape-rendering="crispEdges"/><rect x="139" y="107" width="1" height="5" fill="#000" shape-rendering="crispEdges"/><path d="M127.3,114.9 L128.7,113.6 L134.3,113.6 Q138.6,114 138.9,117.3 Q139,120.6 134.3,122.5 Q131,123.3 129.4,121.4 Q128.6,119 132.3,117.5 Q135,117 134.6,118.4 L133.3,119.6" fill="none" stroke="#000" stroke-width="1.15"/><polygon points="157.8,108.7 155.6,111.4 153.8,116.1 157.1,117.6 162.9,116.1 163.1,112.8" fill="#b4b4b4" stroke="#000" stroke-width="0.9" /><polygon points="157.8,108.7 159.6,106.5 161.1,106.3 163.1,107.4 163.1,112.8" fill="#ff0000" stroke="#000" stroke-width="0.5" /><line x1="159.32" y1="106.45" x2="153.56" y2="116.35" stroke="#000" stroke-width="1.2" /><line x1="157.79" y1="108.7" x2="163.1" y2="112.83999999999999" stroke="#000" stroke-width="1.1" /><line x1="163.1" y1="115.99" x2="157.07" y2="117.78999999999999" stroke="#000" stroke-width="1.2" /><polygon points="153.8,116.1 156.9,117.6 153.4,119.2" fill="#ff1010" stroke="#000" stroke-width="0.4" /><line x1="157.7" y1="111.85" x2="160.4" y2="114.55" stroke="#e8e8e8" stroke-width="1.2" /><rect x="148" y="120" width="16" height="1" fill="#000" shape-rendering="crispEdges"/><rect x="148" y="118" width="1" height="5" fill="#000" shape-rendering="crispEdges"/><rect x="154" y="118" width="1" height="5" fill="#000" shape-rendering="crispEdges"/><rect x="157" y="119" width="1" height="3" fill="#000" shape-rendering="crispEdges"/><rect x="159" y="119" width="1" height="3" fill="#000" shape-rendering="crispEdges"/><rect x="161" y="118" width="1" height="5" fill="#000" shape-rendering="crispEdges"/><circle cx="179.1" cy="114.9" r="7.4" stroke="#000" fill="none" stroke-width="1.15" /><rect x="172" y="114" width="15" height="1" fill="#000" shape-rendering="crispEdges"/><rect x="174" y="112" width="1" height="5" fill="#000" shape-rendering="crispEdges"/><rect x="176" y="113" width="1" height="3" fill="#000" shape-rendering="crispEdges"/><rect x="178" y="112" width="1" height="5" fill="#000" shape-rendering="crispEdges"/><rect x="180" y="113" width="1" height="3" fill="#000" shape-rendering="crispEdges"/><rect x="182" y="112" width="1" height="5" fill="#000" shape-rendering="crispEdges"/><rect x="184" y="113" width="1" height="3" fill="#000" shape-rendering="crispEdges"/><line x1="182.3" y1="109.7" x2="186.2" y2="106.8" stroke="#000" stroke-width="1.1" /><line x1="183.7" y1="111.9" x2="187" y2="109.3" stroke="#000" stroke-width="1.1" /><rect x="195" y="109" width="1" height="11" fill="#000" shape-rendering="crispEdges"/><rect x="198" y="109" width="1" height="11" fill="#000" shape-rendering="crispEdges"/><rect x="202" y="109" width="1" height="11" fill="#000" shape-rendering="crispEdges"/><rect x="207" y="109" width="1" height="11" fill="#000" shape-rendering="crispEdges"/><rect x="194" y="114" width="16" height="1" fill="#000" shape-rendering="crispEdges"/><rect x="217" y="109" width="16" height="1" fill="#000" shape-rendering="crispEdges"/><rect x="218" y="107" width="1" height="5" fill="#000" shape-rendering="crispEdges"/><rect x="221" y="107" width="1" height="5" fill="#000" shape-rendering="crispEdges"/><rect x="225" y="107" width="1" height="5" fill="#000" shape-rendering="crispEdges"/><rect x="230" y="107" width="1" height="5" fill="#000" shape-rendering="crispEdges"/><path d="M220.3,123 L220.3,116.3 M220.3,117.6 Q222.5,115.6 224.5,117 L224.5,123" fill="none" stroke="#000" stroke-width="1.15"/><path d="M227.4,114.8 Q229,112.8 230.6,114.3 Q231,115.6 227.4,118.6 L231.3,118.6" fill="none" stroke="#000" stroke-width="1.05"/><rect x="247" y="107" width="1" height="16" fill="#808080" shape-rendering="crispEdges"/><rect x="251" y="107" width="1" height="16" fill="#808080" shape-rendering="crispEdges"/><rect x="255" y="107" width="1" height="16" fill="#808080" shape-rendering="crispEdges"/><polyline points="240.2,121.9 246.7,109.3 253.5,114.3 242.8,119.8 240.2,121.9" stroke="#000" fill="none" stroke-width="1.05" /><rect x="263" y="116" width="16" height="1" fill="#ff0000" shape-rendering="crispEdges"/><rect x="270" y="107" width="1" height="16" fill="#ff0000" shape-rendering="crispEdges"/><path d="M278.8,112.7 L274.3,109.1 Q270.3,107.8 266.2,109.5 Q264,111.5 264.2,114.9 Q264.6,118.6 267.1,119.8 Q270.3,121.4 273.1,119 Q274.6,116.6 272.5,113.9 Q270,112.6 268.7,114.6 Q268.6,116.2 270.6,116.4" fill="none" stroke="#000" stroke-width="1.1"/><polygon points="291.0,108.5 296.0,108.5 299.5,112.0 299.5,117.0 296.0,120.5 291.0,120.5 287.5,117.0 287.5,112.0" fill="none" stroke="#808080" stroke-width="0.9" /><circle cx="293.5" cy="114.5" r="3.6" stroke="#808080" fill="none" stroke-width="0.9" /><line x1="290.3" y1="111.3" x2="296.7" y2="117.7" stroke="#008080" stroke-width="1.3" /><line x1="290.3" y1="117.7" x2="296.7" y2="111.3" stroke="#008080" stroke-width="1.3" /><rect x="286" y="114" width="1" height="1" fill="#ff0000" shape-rendering="crispEdges"/><rect x="293" y="107" width="1" height="1" fill="#ff0000" shape-rendering="crispEdges"/><rect x="288" y="114" width="1" height="1" fill="#ff0000" shape-rendering="crispEdges"/><rect x="293" y="109" width="1" height="1" fill="#ff0000" shape-rendering="crispEdges"/><rect x="290" y="114" width="1" height="1" fill="#ff0000" shape-rendering="crispEdges"/><rect x="293" y="111" width="1" height="1" fill="#ff0000" shape-rendering="crispEdges"/><rect x="296" y="114" width="1" height="1" fill="#ff0000" shape-rendering="crispEdges"/><rect x="293" y="117" width="1" height="1" fill="#ff0000" shape-rendering="crispEdges"/><rect x="298" y="114" width="1" height="1" fill="#ff0000" shape-rendering="crispEdges"/><rect x="293" y="119" width="1" height="1" fill="#ff0000" shape-rendering="crispEdges"/><rect x="300" y="114" width="1" height="1" fill="#ff0000" shape-rendering="crispEdges"/><rect x="293" y="121" width="1" height="1" fill="#ff0000" shape-rendering="crispEdges"/><rect x="288" y="109" width="1" height="1" fill="#008080" shape-rendering="crispEdges"/><rect x="288" y="119" width="1" height="1" fill="#008080" shape-rendering="crispEdges"/><rect x="298" y="109" width="1" height="1" fill="#008080" shape-rendering="crispEdges"/><rect x="298" y="119" width="1" height="1" fill="#008080" shape-rendering="crispEdges"/><rect x="292" y="114" width="3" height="1" fill="#ff0000" shape-rendering="crispEdges"/><rect x="293" y="113" width="1" height="3" fill="#ff0000" shape-rendering="crispEdges"/><rect x="310.5" y="108.5" width="12" height="12" fill="none" stroke="#808080" stroke-width="1" shape-rendering="crispEdges"/><rect x="312.5" y="110.5" width="8" height="8" fill="none" stroke="#808080" stroke-width="1" shape-rendering="crispEdges"/><rect x="314.5" y="112.5" width="4" height="4" fill="none" stroke="#808080" stroke-width="1" shape-rendering="crispEdges"/><rect x="309" y="114" width="1" height="1" fill="#008080" shape-rendering="crispEdges"/><rect x="316" y="107" width="1" height="1" fill="#008080" shape-rendering="crispEdges"/><rect x="309" y="107" width="1" height="1" fill="#ff0000" shape-rendering="crispEdges"/><rect x="309" y="121" width="1" height="1" fill="#ff0000" shape-rendering="crispEdges"/><rect x="311" y="114" width="1" height="1" fill="#008080" shape-rendering="crispEdges"/><rect x="316" y="109" width="1" height="1" fill="#008080" shape-rendering="crispEdges"/><rect x="311" y="109" width="1" height="1" fill="#ff0000" shape-rendering="crispEdges"/><rect x="311" y="119" width="1" height="1" fill="#ff0000" shape-rendering="crispEdges"/><rect x="313" y="114" width="1" height="1" fill="#008080" shape-rendering="crispEdges"/><rect x="316" y="111" width="1" height="1" fill="#008080" shape-rendering="crispEdges"/><rect x="313" y="111" width="1" height="1" fill="#ff0000" shape-rendering="crispEdges"/><rect x="313" y="117" width="1" height="1" fill="#ff0000" shape-rendering="crispEdges"/><rect x="315" y="114" width="1" height="1" fill="#008080" shape-rendering="crispEdges"/><rect x="316" y="113" width="1" height="1" fill="#008080" shape-rendering="crispEdges"/><rect x="315" y="113" width="1" height="1" fill="#ff0000" shape-rendering="crispEdges"/><rect x="315" y="115" width="1" height="1" fill="#ff0000" shape-rendering="crispEdges"/><rect x="317" y="114" width="1" height="1" fill="#008080" shape-rendering="crispEdges"/><rect x="316" y="115" width="1" height="1" fill="#008080" shape-rendering="crispEdges"/><rect x="317" y="115" width="1" height="1" fill="#ff0000" shape-rendering="crispEdges"/><rect x="317" y="113" width="1" height="1" fill="#ff0000" shape-rendering="crispEdges"/><rect x="319" y="114" width="1" height="1" fill="#008080" shape-rendering="crispEdges"/><rect x="316" y="117" width="1" height="1" fill="#008080" shape-rendering="crispEdges"/><rect x="319" y="117" width="1" height="1" fill="#ff0000" shape-rendering="crispEdges"/><rect x="319" y="111" width="1" height="1" fill="#ff0000" shape-rendering="crispEdges"/><rect x="321" y="114" width="1" height="1" fill="#008080" shape-rendering="crispEdges"/><rect x="316" y="119" width="1" height="1" fill="#008080" shape-rendering="crispEdges"/><rect x="321" y="119" width="1" height="1" fill="#ff0000" shape-rendering="crispEdges"/><rect x="321" y="109" width="1" height="1" fill="#ff0000" shape-rendering="crispEdges"/><rect x="323" y="114" width="1" height="1" fill="#008080" shape-rendering="crispEdges"/><rect x="316" y="121" width="1" height="1" fill="#008080" shape-rendering="crispEdges"/><rect x="323" y="121" width="1" height="1" fill="#ff0000" shape-rendering="crispEdges"/><rect x="323" y="107" width="1" height="1" fill="#ff0000" shape-rendering="crispEdges"/><rect x="316" y="114" width="1" height="1" fill="#ff0000" shape-rendering="crispEdges"/><rect x="333" y="108" width="1" height="14" fill="#000" shape-rendering="crispEdges"/><rect x="340" y="108" width="1" height="14" fill="#000" shape-rendering="crispEdges"/><line x1="333.5" y1="117.5" x2="340.3" y2="109" stroke="#000" stroke-width="1.1" /><rect x="343" y="108" width="1" height="3" fill="#000" shape-rendering="crispEdges"/><rect x="346" y="108" width="1" height="3" fill="#000" shape-rendering="crispEdges"/><rect x="355" y="110" width="16" height="1" fill="#000" shape-rendering="crispEdges"/><rect x="355" y="107" width="1" height="7" fill="#000" shape-rendering="crispEdges"/><rect x="358" y="107" width="1" height="7" fill="#000" shape-rendering="crispEdges"/><rect x="363" y="107" width="1" height="7" fill="#000" shape-rendering="crispEdges"/><rect x="370" y="107" width="1" height="7" fill="#000" shape-rendering="crispEdges"/><text x="357.84" y="122.6" font-size="11.2" fill="#ff0000">神</text><rect x="378" y="110" width="16" height="1" fill="#000" shape-rendering="crispEdges"/><rect x="378" y="107" width="1" height="6" fill="#000" shape-rendering="crispEdges"/><rect x="381" y="107" width="1" height="6" fill="#000" shape-rendering="crispEdges"/><rect x="386" y="107" width="1" height="6" fill="#000" shape-rendering="crispEdges"/><rect x="393" y="107" width="1" height="6" fill="#000" shape-rendering="crispEdges"/><text x="379.35" y="122.6" font-size="11.8" fill="#ff0000">赢</text><rect x="402" y="108" width="14" height="1" fill="#000" shape-rendering="crispEdges"/><rect x="402" y="108" width="1" height="14" fill="#000" shape-rendering="crispEdges"/><rect x="401" y="121" width="3" height="1" fill="#000" shape-rendering="crispEdges"/><rect x="404" y="109" width="1" height="2" fill="#000" shape-rendering="crispEdges"/><rect x="404" y="113" width="1" height="3" fill="#000" shape-rendering="crispEdges"/><rect x="406" y="109" width="1" height="3" fill="#000" shape-rendering="crispEdges"/><rect x="406" y="113" width="1" height="3" fill="#000" shape-rendering="crispEdges"/><rect x="408" y="109" width="1" height="2" fill="#000" shape-rendering="crispEdges"/><rect x="408" y="113" width="1" height="3" fill="#000" shape-rendering="crispEdges"/><rect x="410" y="109" width="1" height="3" fill="#000" shape-rendering="crispEdges"/><rect x="410" y="113" width="1" height="3" fill="#000" shape-rendering="crispEdges"/><rect x="412" y="109" width="1" height="2" fill="#000" shape-rendering="crispEdges"/><rect x="412" y="113" width="1" height="3" fill="#000" shape-rendering="crispEdges"/><rect x="414" y="109" width="1" height="3" fill="#000" shape-rendering="crispEdges"/><rect x="414" y="113" width="1" height="3" fill="#000" shape-rendering="crispEdges"/><rect x="402" y="116" width="14" height="1" fill="#000" shape-rendering="crispEdges"/><text x="405.2" y="122" font-size="5.6" font-weight="bold" fill="#000" textLength="10.6" lengthAdjust="spacing">123</text><rect x="424" y="109" width="1" height="10" fill="#000" shape-rendering="crispEdges"/><rect x="431" y="107" width="1" height="16" fill="#000" shape-rendering="crispEdges"/><rect x="438" y="109" width="1" height="10" fill="#000" shape-rendering="crispEdges"/><rect x="424" y="113" width="15" height="1" fill="#000" shape-rendering="crispEdges"/><polygon points="425,113.5 428.2,111.2 428.2,115.8" fill="#000" stroke="none" stroke-width="1" /><polygon points="438,113.5 434.8,111.2 434.8,115.8" fill="#000" stroke="none" stroke-width="1" /><rect x="445" y="102" width="1" height="25" fill="#a0a0a0" shape-rendering="crispEdges"/><rect x="446" y="102" width="1" height="25" fill="#fff" shape-rendering="crispEdges"/><rect x="450" y="105" width="1" height="19" fill="#fff" shape-rendering="crispEdges"/><rect x="452" y="105" width="1" height="19" fill="#a0a0a0" shape-rendering="crispEdges"/><rect x="450" y="124" width="3" height="1" fill="#a0a0a0" shape-rendering="crispEdges"/><rect x="462.5" y="108.5" width="9" height="9" fill="#f6f6f6" stroke="#000" stroke-width="1.25"/><rect x="459" y="108" width="1" height="10" fill="#909090" shape-rendering="crispEdges"/><rect x="457" y="108" width="5" height="1" fill="#909090" shape-rendering="crispEdges"/><rect x="457" y="117" width="5" height="1" fill="#909090" shape-rendering="crispEdges"/><rect x="458" y="110" width="3" height="1" fill="#909090" shape-rendering="crispEdges"/><rect x="458" y="115" width="3" height="1" fill="#909090" shape-rendering="crispEdges"/><rect x="462" y="120" width="10" height="1" fill="#909090" shape-rendering="crispEdges"/><rect x="462" y="118" width="1" height="5" fill="#909090" shape-rendering="crispEdges"/><rect x="471" y="118" width="1" height="5" fill="#909090" shape-rendering="crispEdges"/><rect x="464" y="119" width="1" height="3" fill="#909090" shape-rendering="crispEdges"/><rect x="469" y="119" width="1" height="3" fill="#909090" shape-rendering="crispEdges"/><line x1="481.4" y1="121.5" x2="483.4" y2="107.4" stroke="#900000" stroke-width="1.1" /><line x1="481.4" y1="121.5" x2="488.7" y2="107.4" stroke="#ff0000" stroke-width="1.15" /><line x1="481.4" y1="121.5" x2="495.5" y2="107.4" stroke="#000" stroke-width="1.0" /><line x1="481.4" y1="121.5" x2="495.8" y2="114.1" stroke="#ff0000" stroke-width="1.15" /><line x1="481.4" y1="121.5" x2="495.8" y2="119.2" stroke="#900000" stroke-width="1.1" /><rect x="480" y="120" width="3" height="3" fill="#e00000" shape-rendering="crispEdges"/><rect x="503.5" y="109.5" width="13" height="13" fill="none" stroke="#000" stroke-width="1.25"/><line x1="503.5" y1="122.5" x2="507.4" y2="107.6" stroke="#9000a0" stroke-width="1.1" /><line x1="503.5" y1="122.5" x2="512.7" y2="107.6" stroke="#900000" stroke-width="1.1" /><line x1="503.5" y1="122.5" x2="519" y2="113.3" stroke="#900000" stroke-width="1.1" /><polyline points="503.5,122.5 510,120.7 519,118.4" stroke="#9000a0" fill="none" stroke-width="1.1" /><line x1="503.5" y1="122.5" x2="517.8" y2="107.6" stroke="#ff0000" stroke-width="1.2" /><polygon points="503.5,122.5 504.5,118.5 507.5,121.5" fill="#9000a0" stroke="none" stroke-width="1" /><rect x="526.5" y="107.5" width="13" height="13" fill="none" stroke="#000" stroke-width="1.25"/><polyline points="526.5,107.5 528.5,113 531.6,122.6" stroke="#9000a0" fill="none" stroke-width="1.1" /><polyline points="526.5,107.5 531,109.3 541.8,111.3" stroke="#9000a0" fill="none" stroke-width="1.1" /><line x1="526.5" y1="107.5" x2="537.5" y2="122.6" stroke="#900000" stroke-width="1.1" /><line x1="526.5" y1="107.5" x2="541.8" y2="117.3" stroke="#900000" stroke-width="1.1" /><line x1="526.5" y1="107.5" x2="541.8" y2="122.6" stroke="#ff0000" stroke-width="1.25" /><line x1="549.1" y1="122.3" x2="564.9" y2="107.1" stroke="#000" stroke-width="1.05" /><line x1="550" y1="122" x2="564.9" y2="114.1" stroke="#000" stroke-width="1.05" /><line x1="551" y1="122" x2="564.9" y2="118.7" stroke="#000" stroke-width="1.05" /><polygon points="548.8,122.6 553.2,118.6 553.6,122.6" fill="#000" stroke="none" stroke-width="1" /><polyline points="572.3,108.2 578.2,121.5 583.6,112.5 587,116.8" stroke="#000" fill="none" stroke-width="1.1" /><rect x="572" y="121" width="1" height="1" fill="#909090" shape-rendering="crispEdges"/><rect x="574" y="121" width="1" height="1" fill="#909090" shape-rendering="crispEdges"/><rect x="576" y="121" width="1" height="1" fill="#909090" shape-rendering="crispEdges"/><rect x="578" y="121" width="1" height="1" fill="#909090" shape-rendering="crispEdges"/><rect x="580" y="121" width="1" height="1" fill="#909090" shape-rendering="crispEdges"/><rect x="582" y="121" width="1" height="1" fill="#909090" shape-rendering="crispEdges"/><rect x="584" y="121" width="1" height="1" fill="#909090" shape-rendering="crispEdges"/><rect x="586" y="121" width="1" height="1" fill="#909090" shape-rendering="crispEdges"/><rect x="595" y="107" width="15" height="15" fill="#8a8a8a" shape-rendering="crispEdges"/><rect x="596" y="108" width="3" height="3" fill="#fff" shape-rendering="crispEdges"/><rect x="597" y="108" width="1" height="3" fill="#9a9a9a" shape-rendering="crispEdges"/><rect x="596" y="109" width="3" height="1" fill="#9a9a9a" shape-rendering="crispEdges"/><rect x="596" y="112" width="3" height="2" fill="#fff" shape-rendering="crispEdges"/><rect x="597" y="112" width="1" height="2" fill="#9a9a9a" shape-rendering="crispEdges"/><rect x="596" y="115" width="3" height="2" fill="#fff" shape-rendering="crispEdges"/><rect x="597" y="115" width="1" height="2" fill="#9a9a9a" shape-rendering="crispEdges"/><rect x="596" y="118" width="3" height="3" fill="#fff" shape-rendering="crispEdges"/><rect x="597" y="118" width="1" height="3" fill="#9a9a9a" shape-rendering="crispEdges"/><rect x="596" y="119" width="3" height="1" fill="#9a9a9a" shape-rendering="crispEdges"/><rect x="600" y="108" width="2" height="3" fill="#fff" shape-rendering="crispEdges"/><rect x="600" y="109" width="2" height="1" fill="#9a9a9a" shape-rendering="crispEdges"/><rect x="600" y="112" width="2" height="2" fill="#fff" shape-rendering="crispEdges"/><rect x="600" y="115" width="2" height="2" fill="#fff" shape-rendering="crispEdges"/><rect x="600" y="118" width="2" height="3" fill="#fff" shape-rendering="crispEdges"/><rect x="600" y="119" width="2" height="1" fill="#9a9a9a" shape-rendering="crispEdges"/><rect x="603" y="108" width="2" height="3" fill="#fff" shape-rendering="crispEdges"/><rect x="603" y="109" width="2" height="1" fill="#9a9a9a" shape-rendering="crispEdges"/><rect x="603" y="112" width="2" height="2" fill="#fff" shape-rendering="crispEdges"/><rect x="603" y="115" width="2" height="2" fill="#fff" shape-rendering="crispEdges"/><rect x="603" y="118" width="2" height="3" fill="#fff" shape-rendering="crispEdges"/><rect x="603" y="119" width="2" height="1" fill="#9a9a9a" shape-rendering="crispEdges"/><rect x="606" y="108" width="3" height="3" fill="#fff" shape-rendering="crispEdges"/><rect x="607" y="108" width="1" height="3" fill="#9a9a9a" shape-rendering="crispEdges"/><rect x="606" y="109" width="3" height="1" fill="#9a9a9a" shape-rendering="crispEdges"/><rect x="606" y="112" width="3" height="2" fill="#fff" shape-rendering="crispEdges"/><rect x="607" y="112" width="1" height="2" fill="#9a9a9a" shape-rendering="crispEdges"/><rect x="606" y="115" width="3" height="2" fill="#fff" shape-rendering="crispEdges"/><rect x="607" y="115" width="1" height="2" fill="#9a9a9a" shape-rendering="crispEdges"/><rect x="606" y="118" width="3" height="3" fill="#fff" shape-rendering="crispEdges"/><rect x="607" y="118" width="1" height="3" fill="#9a9a9a" shape-rendering="crispEdges"/><rect x="606" y="119" width="3" height="1" fill="#9a9a9a" shape-rendering="crispEdges"/><rect x="600" y="109" width="2" height="1" fill="#8a8a8a" shape-rendering="crispEdges"/><rect x="600" y="119" width="2" height="1" fill="#8a8a8a" shape-rendering="crispEdges"/><rect x="597" y="112" width="1" height="2" fill="#8a8a8a" shape-rendering="crispEdges"/><rect x="607" y="112" width="1" height="2" fill="#8a8a8a" shape-rendering="crispEdges"/><rect x="603" y="109" width="2" height="1" fill="#8a8a8a" shape-rendering="crispEdges"/><rect x="603" y="119" width="2" height="1" fill="#8a8a8a" shape-rendering="crispEdges"/><rect x="597" y="115" width="1" height="2" fill="#8a8a8a" shape-rendering="crispEdges"/><rect x="607" y="115" width="1" height="2" fill="#8a8a8a" shape-rendering="crispEdges"/><rect x="597" y="109" width="1" height="1" fill="#8a8a8a" shape-rendering="crispEdges"/><rect x="607" y="109" width="1" height="1" fill="#8a8a8a" shape-rendering="crispEdges"/><rect x="597" y="119" width="1" height="1" fill="#8a8a8a" shape-rendering="crispEdges"/><rect x="607" y="119" width="1" height="1" fill="#8a8a8a" shape-rendering="crispEdges"/><polygon points="602.5,111.6 605.4,114.5 602.5,117.4 599.6,114.5" fill="#fff" stroke="#8a8a8a" stroke-width="0.9" /><rect x="599" y="107" width="1" height="1" fill="#ff0000" shape-rendering="crispEdges"/><rect x="599" y="111" width="1" height="1" fill="#ff0000" shape-rendering="crispEdges"/><rect x="599" y="114" width="1" height="1" fill="#ff0000" shape-rendering="crispEdges"/><rect x="599" y="117" width="1" height="1" fill="#ff0000" shape-rendering="crispEdges"/><rect x="599" y="121" width="1" height="1" fill="#ff0000" shape-rendering="crispEdges"/><rect x="602" y="107" width="1" height="1" fill="#ff0000" shape-rendering="crispEdges"/><rect x="602" y="111" width="1" height="1" fill="#ff0000" shape-rendering="crispEdges"/><rect x="602" y="114" width="1" height="1" fill="#ff0000" shape-rendering="crispEdges"/><rect x="602" y="117" width="1" height="1" fill="#ff0000" shape-rendering="crispEdges"/><rect x="602" y="121" width="1" height="1" fill="#ff0000" shape-rendering="crispEdges"/><rect x="605" y="107" width="1" height="1" fill="#ff0000" shape-rendering="crispEdges"/><rect x="605" y="111" width="1" height="1" fill="#ff0000" shape-rendering="crispEdges"/><rect x="605" y="114" width="1" height="1" fill="#ff0000" shape-rendering="crispEdges"/><rect x="605" y="117" width="1" height="1" fill="#ff0000" shape-rendering="crispEdges"/><rect x="605" y="121" width="1" height="1" fill="#ff0000" shape-rendering="crispEdges"/><rect x="609" y="107" width="1" height="1" fill="#ff0000" shape-rendering="crispEdges"/><rect x="609" y="111" width="1" height="1" fill="#ff0000" shape-rendering="crispEdges"/><rect x="609" y="114" width="1" height="1" fill="#ff0000" shape-rendering="crispEdges"/><rect x="609" y="117" width="1" height="1" fill="#ff0000" shape-rendering="crispEdges"/><rect x="609" y="121" width="1" height="1" fill="#ff0000" shape-rendering="crispEdges"/><rect x="602" y="114" width="1" height="1" fill="#ff0000" shape-rendering="crispEdges"/><rect x="618" y="107" width="15" height="15" fill="#8a8a8a" shape-rendering="crispEdges"/><rect x="619" y="108" width="3" height="3" fill="#fff" shape-rendering="crispEdges"/><rect x="620" y="108" width="1" height="3" fill="#9a9a9a" shape-rendering="crispEdges"/><rect x="619" y="109" width="3" height="1" fill="#9a9a9a" shape-rendering="crispEdges"/><rect x="619" y="112" width="3" height="2" fill="#fff" shape-rendering="crispEdges"/><rect x="620" y="112" width="1" height="2" fill="#9a9a9a" shape-rendering="crispEdges"/><rect x="619" y="115" width="3" height="2" fill="#fff" shape-rendering="crispEdges"/><rect x="620" y="115" width="1" height="2" fill="#9a9a9a" shape-rendering="crispEdges"/><rect x="619" y="118" width="3" height="3" fill="#fff" shape-rendering="crispEdges"/><rect x="620" y="118" width="1" height="3" fill="#9a9a9a" shape-rendering="crispEdges"/><rect x="619" y="119" width="3" height="1" fill="#9a9a9a" shape-rendering="crispEdges"/><rect x="623" y="108" width="2" height="3" fill="#fff" shape-rendering="crispEdges"/><rect x="623" y="109" width="2" height="1" fill="#9a9a9a" shape-rendering="crispEdges"/><rect x="623" y="112" width="2" height="2" fill="#fff" shape-rendering="crispEdges"/><rect x="623" y="115" width="2" height="2" fill="#fff" shape-rendering="crispEdges"/><rect x="623" y="118" width="2" height="3" fill="#fff" shape-rendering="crispEdges"/><rect x="623" y="119" width="2" height="1" fill="#9a9a9a" shape-rendering="crispEdges"/><rect x="626" y="108" width="2" height="3" fill="#fff" shape-rendering="crispEdges"/><rect x="626" y="109" width="2" height="1" fill="#9a9a9a" shape-rendering="crispEdges"/><rect x="626" y="112" width="2" height="2" fill="#fff" shape-rendering="crispEdges"/><rect x="626" y="115" width="2" height="2" fill="#fff" shape-rendering="crispEdges"/><rect x="626" y="118" width="2" height="3" fill="#fff" shape-rendering="crispEdges"/><rect x="626" y="119" width="2" height="1" fill="#9a9a9a" shape-rendering="crispEdges"/><rect x="629" y="108" width="3" height="3" fill="#fff" shape-rendering="crispEdges"/><rect x="630" y="108" width="1" height="3" fill="#9a9a9a" shape-rendering="crispEdges"/><rect x="629" y="109" width="3" height="1" fill="#9a9a9a" shape-rendering="crispEdges"/><rect x="629" y="112" width="3" height="2" fill="#fff" shape-rendering="crispEdges"/><rect x="630" y="112" width="1" height="2" fill="#9a9a9a" shape-rendering="crispEdges"/><rect x="629" y="115" width="3" height="2" fill="#fff" shape-rendering="crispEdges"/><rect x="630" y="115" width="1" height="2" fill="#9a9a9a" shape-rendering="crispEdges"/><rect x="629" y="118" width="3" height="3" fill="#fff" shape-rendering="crispEdges"/><rect x="630" y="118" width="1" height="3" fill="#9a9a9a" shape-rendering="crispEdges"/><rect x="629" y="119" width="3" height="1" fill="#9a9a9a" shape-rendering="crispEdges"/><rect x="623" y="109" width="2" height="1" fill="#8a8a8a" shape-rendering="crispEdges"/><rect x="623" y="119" width="2" height="1" fill="#8a8a8a" shape-rendering="crispEdges"/><rect x="620" y="112" width="1" height="2" fill="#8a8a8a" shape-rendering="crispEdges"/><rect x="630" y="112" width="1" height="2" fill="#8a8a8a" shape-rendering="crispEdges"/><rect x="626" y="109" width="2" height="1" fill="#8a8a8a" shape-rendering="crispEdges"/><rect x="626" y="119" width="2" height="1" fill="#8a8a8a" shape-rendering="crispEdges"/><rect x="620" y="115" width="1" height="2" fill="#8a8a8a" shape-rendering="crispEdges"/><rect x="630" y="115" width="1" height="2" fill="#8a8a8a" shape-rendering="crispEdges"/><rect x="620" y="109" width="1" height="1" fill="#8a8a8a" shape-rendering="crispEdges"/><rect x="630" y="109" width="1" height="1" fill="#8a8a8a" shape-rendering="crispEdges"/><rect x="620" y="119" width="1" height="1" fill="#8a8a8a" shape-rendering="crispEdges"/><rect x="630" y="119" width="1" height="1" fill="#8a8a8a" shape-rendering="crispEdges"/><polygon points="625.5,111.6 628.4,114.5 625.5,117.4 622.6,114.5" fill="#fff" stroke="#8a8a8a" stroke-width="0.9" /><rect x="622" y="107" width="1" height="1" fill="#ff0000" shape-rendering="crispEdges"/><rect x="622" y="111" width="1" height="1" fill="#ff0000" shape-rendering="crispEdges"/><rect x="622" y="114" width="1" height="1" fill="#ff0000" shape-rendering="crispEdges"/><rect x="622" y="117" width="1" height="1" fill="#ff0000" shape-rendering="crispEdges"/><rect x="622" y="121" width="1" height="1" fill="#ff0000" shape-rendering="crispEdges"/><rect x="625" y="107" width="1" height="1" fill="#ff0000" shape-rendering="crispEdges"/><rect x="625" y="111" width="1" height="1" fill="#ff0000" shape-rendering="crispEdges"/><rect x="625" y="114" width="1" height="1" fill="#ff0000" shape-rendering="crispEdges"/><rect x="625" y="117" width="1" height="1" fill="#ff0000" shape-rendering="crispEdges"/><rect x="625" y="121" width="1" height="1" fill="#ff0000" shape-rendering="crispEdges"/><rect x="628" y="107" width="1" height="1" fill="#ff0000" shape-rendering="crispEdges"/><rect x="628" y="111" width="1" height="1" fill="#ff0000" shape-rendering="crispEdges"/><rect x="628" y="114" width="1" height="1" fill="#ff0000" shape-rendering="crispEdges"/><rect x="628" y="117" width="1" height="1" fill="#ff0000" shape-rendering="crispEdges"/><rect x="628" y="121" width="1" height="1" fill="#ff0000" shape-rendering="crispEdges"/><rect x="632" y="107" width="1" height="1" fill="#ff0000" shape-rendering="crispEdges"/><rect x="632" y="111" width="1" height="1" fill="#ff0000" shape-rendering="crispEdges"/><rect x="632" y="114" width="1" height="1" fill="#ff0000" shape-rendering="crispEdges"/><rect x="632" y="117" width="1" height="1" fill="#ff0000" shape-rendering="crispEdges"/><rect x="632" y="121" width="1" height="1" fill="#ff0000" shape-rendering="crispEdges"/><rect x="625" y="114" width="1" height="1" fill="#ff0000" shape-rendering="crispEdges"/><rect x="616" y="106" width="6" height="17" fill="#f0f0f0" shape-rendering="crispEdges"/><rect x="616" y="122" width="18" height="1" fill="#f0f0f0" shape-rendering="crispEdges"/><rect x="619" y="107" width="1.4" height="15" fill="#000" shape-rendering="crispEdges"/><rect x="619" y="121" width="14" height="1.4" fill="#000" shape-rendering="crispEdges"/><polygon points="619.7,105.6 617.4,109.2 622,109.2" fill="#000" stroke="none" stroke-width="1" /><polygon points="634.2,121.7 630.6,119.4 630.6,124" fill="#000" stroke="none" stroke-width="1" /><rect x="641" y="107" width="1" height="15" fill="#808080" shape-rendering="crispEdges"/><rect x="652" y="107" width="1" height="15" fill="#808080" shape-rendering="crispEdges"/><line x1="641.3" y1="113.6" x2="655.8" y2="107.4" stroke="#000" stroke-width="1.15" /><line x1="641.3" y1="117.55" x2="655.8" y2="111.35000000000001" stroke="#000" stroke-width="1.15" /><line x1="641.3" y1="121.5" x2="655.8" y2="115.30000000000001" stroke="#000" stroke-width="1.15" /><rect x="662" y="102" width="1" height="25" fill="#a0a0a0" shape-rendering="crispEdges"/><rect x="663" y="102" width="1" height="25" fill="#fff" shape-rendering="crispEdges"/><rect x="667" y="105" width="1" height="19" fill="#fff" shape-rendering="crispEdges"/><rect x="668" y="105" width="1" height="20" fill="#a0a0a0" shape-rendering="crispEdges"/><rect x="666" y="124" width="2" height="1" fill="#a0a0a0" shape-rendering="crispEdges"/><rect x="675" y="108" width="1.3" height="14" fill="#000" shape-rendering="crispEdges"/><rect x="675" y="121" width="14" height="1.2" fill="#000" shape-rendering="crispEdges"/><rect x="684" y="108" width="1" height="14" fill="#000" shape-rendering="crispEdges"/><rect x="676" y="108" width="8" height="1" fill="#000" shape-rendering="crispEdges"/><rect x="676" y="110" width="5" height="1" fill="#000" shape-rendering="crispEdges"/><rect x="676" y="112" width="8" height="1" fill="#000" shape-rendering="crispEdges"/><rect x="676" y="114" width="5" height="1" fill="#000" shape-rendering="crispEdges"/><rect x="676" y="116" width="8" height="1" fill="#000" shape-rendering="crispEdges"/><rect x="676" y="118" width="5" height="1" fill="#000" shape-rendering="crispEdges"/><rect x="686" y="108" width="3" height="1" fill="#000" shape-rendering="crispEdges"/><rect x="686" y="109" width="2" height="1" fill="#000" shape-rendering="crispEdges"/><rect x="686" y="111" width="2" height="1" fill="#000" shape-rendering="crispEdges"/><rect x="686" y="112" width="3" height="1" fill="#000" shape-rendering="crispEdges"/><rect x="686" y="114" width="2" height="1" fill="#000" shape-rendering="crispEdges"/><rect x="686" y="117" width="3" height="1" fill="#000" shape-rendering="crispEdges"/><rect x="686" y="119" width="2" height="1" fill="#000" shape-rendering="crispEdges"/><rect x="688" y="109" width="1" height="3" fill="#000" shape-rendering="crispEdges"/><rect x="688" y="116" width="1" height="4" fill="#000" shape-rendering="crispEdges"/><rect x="688" y="121" width="1" height="2" fill="#000" shape-rendering="crispEdges"/><rect x="697" y="107" width="16" height="1.3" fill="#ff0000" shape-rendering="crispEdges"/><rect x="705" y="113" width="8" height="1.2" fill="#ff0000" shape-rendering="crispEdges"/><rect x="697" y="122" width="6" height="1.3" fill="#ff0000" shape-rendering="crispEdges"/><polyline points="699.2,122 705,108.5 709.5,112.7 713,109.4" stroke="#000" fill="none" stroke-width="1.05" /><text x="703.8" y="122.8" font-size="10.5" fill="#ff0000" textLength="9.3" lengthAdjust="spacingAndGlyphs">%</text><ellipse cx="723.9" cy="111.5" rx="2" ry="2.6" fill="none" stroke="#000" stroke-width="1.15"/><ellipse cx="731.9" cy="118.5" rx="2" ry="2.6" fill="none" stroke="#000" stroke-width="1.15"/><line x1="730.6" y1="109" x2="725" y2="121.2" stroke="#000" stroke-width="1.15" /><rect x="743" y="107" width="16" height="1.3" fill="#000" shape-rendering="crispEdges"/><rect x="751" y="110.7" width="8" height="1.3" fill="#000" shape-rendering="crispEdges"/><rect x="751" y="115" width="8" height="1.3" fill="#000" shape-rendering="crispEdges"/><rect x="743" y="121.8" width="16" height="1.3" fill="#000" shape-rendering="crispEdges"/><text x="742.6" y="120.9" font-size="10.5" fill="#ff0000" font-weight="normal" >%</text><circle cx="774" cy="114.6" r="7.4" stroke="#909090" fill="none" stroke-width="1" /><text x="768.6" y="119" font-size="10.8" fill="#808000">金</text><rect x="789" y="107" width="16" height="1.3" fill="#000" shape-rendering="crispEdges"/><rect x="797" y="110.7" width="8" height="1.3" fill="#000" shape-rendering="crispEdges"/><rect x="797" y="115" width="8" height="1.3" fill="#000" shape-rendering="crispEdges"/><rect x="789" y="121.8" width="16" height="1.3" fill="#000" shape-rendering="crispEdges"/><text x="788.3" y="120.6" font-size="10.5" fill="#808000">金</text><rect x="814.3" y="107" width="1.4" height="15.5" fill="#000" shape-rendering="crispEdges"/><rect x="812.3" y="109" width="5.4" height="1.2" fill="#000" shape-rendering="crispEdges"/><rect x="812.3" y="112.5" width="5.4" height="1.2" fill="#000" shape-rendering="crispEdges"/><rect x="812.3" y="116" width="5.4" height="1.2" fill="#000" shape-rendering="crispEdges"/><rect x="812" y="121.5" width="6" height="1.3" fill="#000" shape-rendering="crispEdges"/><polygon points="822.6,109.2 820.5,111.9 818.7,116.5 821.9,118.0 827.6,116.5 827.8,113.3" fill="#b4b4b4" stroke="#000" stroke-width="0.9" /><polygon points="822.6,109.2 824.4,107.0 825.9,106.9 827.8,108.0 827.8,113.3" fill="#ff0000" stroke="#000" stroke-width="0.5" /><line x1="824.104" y1="107.03999999999999" x2="818.472" y2="116.72" stroke="#000" stroke-width="1.2" /><line x1="822.6080000000001" y1="109.24" x2="827.8000000000001" y2="113.28799999999998" stroke="#000" stroke-width="1.1" /><line x1="827.8000000000001" y1="116.368" x2="821.904" y2="118.12799999999999" stroke="#000" stroke-width="1.2" /><polygon points="818.7,116.5 821.7,118.0 818.3,119.5" fill="#ff1010" stroke="#000" stroke-width="0.4" /><line x1="822.52" y1="112.32" x2="825.16" y2="114.96" stroke="#e8e8e8" stroke-width="1.2" /><rect x="835" y="107" width="16" height="1.4" fill="#ff0000" shape-rendering="crispEdges"/><rect x="835" y="121.8" width="16" height="1.4" fill="#ff0000" shape-rendering="crispEdges"/><rect x="835" y="114" width="16" height="1" fill="#000" shape-rendering="crispEdges"/><path d="M836.5,119 Q838,107 840.5,110.5 Q842.5,114 843.5,118 Q846,124 848,114 Q849,109.5 850.3,108.5" fill="none" stroke="#909090" stroke-width="1.1"/><rect x="858" y="107" width="16" height="1.4" fill="#ff0000" shape-rendering="crispEdges"/><rect x="858" y="121.8" width="16" height="1.4" fill="#ff0000" shape-rendering="crispEdges"/><text x="860.6" y="120.2" font-size="10.8" fill="#808000">金</text><line x1="881" y1="122.6" x2="896" y2="107" stroke="#000" stroke-width="1.0" /><rect x="888.5" y="114" width="8" height="1" fill="#000" shape-rendering="crispEdges"/><rect x="885" y="118" width="11.5" height="1" fill="#000" shape-rendering="crispEdges"/><rect x="881.5" y="122" width="15" height="1" fill="#000" shape-rendering="crispEdges"/><text x="880.8" y="115.8" font-size="10.5" fill="#ff0000" font-weight="normal" >J</text><line x1="904.2" y1="122.6" x2="919.2" y2="107" stroke="#000" stroke-width="1.0" /><rect x="911.7" y="114" width="8" height="1" fill="#000" shape-rendering="crispEdges"/><rect x="908.2" y="118" width="11.5" height="1" fill="#000" shape-rendering="crispEdges"/><rect x="904.7" y="122" width="15" height="1" fill="#000" shape-rendering="crispEdges"/><text x="903.8" y="116" font-size="12.6" fill="#ff0000" font-weight="bold" >F</text><line x1="926.8" y1="122.6" x2="941.8" y2="107" stroke="#000" stroke-width="1.0" /><rect x="934.3" y="114" width="8" height="1" fill="#000" shape-rendering="crispEdges"/><rect x="930.8" y="118" width="11.5" height="1" fill="#000" shape-rendering="crispEdges"/><rect x="927.3" y="122" width="15" height="1" fill="#000" shape-rendering="crispEdges"/><text x="926.29" y="116.6" font-size="10.4" fill="#808000" stroke="#808000" stroke-width="0.2">金</text><line x1="950" y1="122.6" x2="965" y2="107" stroke="#000" stroke-width="1.0" /><rect x="957.5" y="114" width="8" height="1" fill="#000" shape-rendering="crispEdges"/><rect x="954" y="118" width="11.5" height="1" fill="#000" shape-rendering="crispEdges"/><rect x="950.5" y="122" width="15" height="1" fill="#000" shape-rendering="crispEdges"/><text x="949.64" y="117.3" font-size="11.4" fill="#ff0000" stroke="#ff0000" stroke-width="0.2">神</text><line x1="972.7" y1="122.6" x2="987.7" y2="107" stroke="#000" stroke-width="1.0" /><rect x="980.2" y="114" width="8" height="1" fill="#000" shape-rendering="crispEdges"/><rect x="976.7" y="118" width="11.5" height="1" fill="#000" shape-rendering="crispEdges"/><rect x="973.2" y="122" width="15" height="1" fill="#000" shape-rendering="crispEdges"/><text x="972.53" y="118" font-size="12.4" fill="#ff0000">赢</text><line x1="996" y1="122.6" x2="1011" y2="107" stroke="#000" stroke-width="1.0" /><rect x="1003.5" y="114" width="8" height="1" fill="#000" shape-rendering="crispEdges"/><rect x="1000" y="118" width="11.5" height="1" fill="#000" shape-rendering="crispEdges"/><rect x="996.5" y="122" width="15" height="1" fill="#000" shape-rendering="crispEdges"/><text x="995.27" y="116.2" font-size="10.6" fill="#ff0000" stroke="#ff0000" stroke-width="0.4">四</text>
<g shape-rendering="crispEdges">
<rect x="69" y="140" width="1170" height="1" fill="#a0a0a0"/>
</g>
<text x="70" y="138" font-size="9.5" fill="#909090" textLength="22" lengthAdjust="spacingAndGlyphs">02-21</text>
<text x="129" y="138" font-size="9.5" fill="#909090" textLength="22" lengthAdjust="spacingAndGlyphs">03-07</text>
<text x="199" y="138" font-size="9.5" fill="#909090" textLength="22" lengthAdjust="spacingAndGlyphs">03-21</text>
<text x="269" y="138" font-size="9.5" fill="#909090" textLength="22" lengthAdjust="spacingAndGlyphs">04-04</text>
<text x="338" y="138" font-size="9.5" fill="#909090" textLength="22" lengthAdjust="spacingAndGlyphs">04-21</text>
<text x="408" y="138" font-size="9.5" fill="#909090" textLength="22" lengthAdjust="spacingAndGlyphs">05-07</text>
<text x="478" y="138" font-size="9.5" fill="#909090" textLength="22" lengthAdjust="spacingAndGlyphs">05-21</text>
<text x="548" y="138" font-size="9.5" fill="#909090" textLength="22" lengthAdjust="spacingAndGlyphs">06-05</text>
<text x="618" y="138" font-size="9.5" fill="#909090" textLength="22" lengthAdjust="spacingAndGlyphs">06-19</text>
<text x="689" y="138" font-size="9.5" fill="#909090" textLength="22" lengthAdjust="spacingAndGlyphs">07-03</text>
<text x="758" y="138" font-size="9.5" fill="#909090" textLength="22" lengthAdjust="spacingAndGlyphs">07-17</text>
<text x="828" y="138" font-size="9.5" fill="#909090" textLength="22" lengthAdjust="spacingAndGlyphs">07-31</text>
<text x="898" y="138" font-size="9.5" fill="#909090" textLength="22" lengthAdjust="spacingAndGlyphs">08-14</text>
<text x="968" y="138" font-size="9.5" fill="#909090" textLength="22" lengthAdjust="spacingAndGlyphs">08-28</text>
<text x="1038" y="138" font-size="9.5" fill="#909090" textLength="22" lengthAdjust="spacingAndGlyphs">09-11</text>
<text x="1108" y="138" font-size="9.5" fill="#909090" textLength="22" lengthAdjust="spacingAndGlyphs">09-25</text>
<text x="1177" y="138" font-size="9.5" fill="#909090" textLength="22" lengthAdjust="spacingAndGlyphs">10-09</text>
<text x="2" y="145" font-size="12" fill="#0000ff">日K线</text>
<text x="70" y="154" font-size="13" fill="#000">极反通道</text>
<text x="139.5" y="153.6" font-size="11.6" fill="#ff0000" textLength="69.3" lengthAdjust="spacingAndGlyphs">Tp=2269.1965</text>
<text x="218.3" y="153.6" font-size="11.6" fill="#0000ff" textLength="70.5" lengthAdjust="spacingAndGlyphs">Up=2169.3219</text>
<text x="297" y="153.6" font-size="11.6" fill="#000" textLength="70.5" lengthAdjust="spacingAndGlyphs">Md=2056.3501</text>
<text x="376.7" y="153.6" font-size="11.6" fill="#0000ff" textLength="70.8" lengthAdjust="spacingAndGlyphs">Dn=1903.8158</text>
<text x="455.9" y="153.6" font-size="11.6" fill="#ff0000" textLength="64.6" lengthAdjust="spacingAndGlyphs">Bt=1765.7891</text>
<path d="M372.3,157.2 L373.6,155.2 L376,155.2 L376,157 L374.5,158.6 L373,158.6 Z" fill="#000"/>
<text x="1139" y="153" font-size="13" font-family="Liberation Serif, serif" fill="#0000ff" textLength="39" lengthAdjust="spacingAndGlyphs">1A0001</text>
<text x="1187" y="153" font-size="13" fill="#0000ff">上证指数</text>
<g shape-rendering="crispEdges" fill="none" stroke-width="1">
<line x1="69" y1="524.5" x2="1239" y2="524.5" stroke="#a0a0a0" stroke-dasharray="3,3"/>
<line x1="69" y1="542.5" x2="1239" y2="542.5" stroke="#a0a0a0" stroke-dasharray="3,3"/>
<line x1="69" y1="558.5" x2="1239" y2="558.5" stroke="#a0a0a0" stroke-dasharray="3,3"/>
<line x1="69" y1="574.5" x2="1239" y2="574.5" stroke="#a0a0a0" stroke-dasharray="3,3"/>
<line x1="67" y1="612.5" x2="1239" y2="612.5" stroke="#a0a0a0" stroke-dasharray="3,3"/>
<line x1="67" y1="630.5" x2="1239" y2="630.5" stroke="#a0a0a0" stroke-dasharray="3,3"/>
<line x1="67" y1="648.5" x2="1239" y2="648.5" stroke="#a0a0a0" stroke-dasharray="3,3"/>
<line x1="67" y1="659.5" x2="1239" y2="659.5" stroke="#a0a0a0" stroke-dasharray="3,3"/>
<line x1="67" y1="666.5" x2="1239" y2="666.5" stroke="#a0a0a0" stroke-dasharray="3,3"/>
<rect x="0" y="590" width="1239" height="2" fill="#808080" stroke="none"/>
<rect x="69" y="607" width="1170" height="1" fill="#a0a0a0" stroke="none"/>
<rect x="72" y="302" width="1" height="19" fill="#008000" stroke="none"/>
<rect x="69" y="302" width="6" height="11" fill="#008000" stroke="none"/>
<rect x="79" y="319" width="1" height="23" fill="#008000" stroke="none"/>
<rect x="76" y="319" width="6" height="14" fill="#008000" stroke="none"/>
<rect x="86" y="327" width="1" height="32" fill="#008000" stroke="none"/>
<rect x="83" y="331" width="6" height="24" fill="#008000" stroke="none"/>
<rect x="93" y="358" width="1" height="8" fill="#ff0000" stroke="none"/>
<rect x="90.5" y="350.5" width="5" height="8" stroke="#ff0000"/>
<rect x="100" y="336" width="1" height="17" fill="#ff0000" stroke="none"/>
<rect x="97" y="347" width="6" height="1" fill="#ff0000" stroke="none"/>
<rect x="107" y="341" width="1" height="1" fill="#ff0000" stroke="none"/>
<rect x="107" y="351" width="1" height="10" fill="#ff0000" stroke="none"/>
<rect x="104.5" y="342.5" width="5" height="9" stroke="#ff0000"/>
<rect x="114" y="331" width="1" height="1" fill="#ff0000" stroke="none"/>
<rect x="114" y="345" width="1" height="2" fill="#ff0000" stroke="none"/>
<rect x="111.5" y="332.5" width="5" height="13" stroke="#ff0000"/>
<rect x="121" y="333" width="1" height="14" fill="#ff0000" stroke="none"/>
<rect x="118" y="334" width="6" height="1" fill="#ff0000" stroke="none"/>
<rect x="128" y="333" width="1" height="14" fill="#008000" stroke="none"/>
<rect x="125" y="333" width="6" height="12" fill="#008000" stroke="none"/>
<rect x="135" y="338" width="1" height="3" fill="#ff0000" stroke="none"/>
<rect x="135" y="346" width="1" height="11" fill="#ff0000" stroke="none"/>
<rect x="132.5" y="341.5" width="5" height="5" stroke="#ff0000"/>
<rect x="142" y="331" width="1" height="16" fill="#008000" stroke="none"/>
<rect x="139" y="340" width="6" height="1" fill="#008000" stroke="none"/>
<rect x="149" y="350" width="1" height="26" fill="#008000" stroke="none"/>
<rect x="146" y="350" width="6" height="24" fill="#008000" stroke="none"/>
<rect x="156" y="368" width="1" height="4" fill="#ff0000" stroke="none"/>
<rect x="156" y="374" width="1" height="7" fill="#ff0000" stroke="none"/>
<rect x="153.5" y="372.5" width="5" height="2" stroke="#ff0000"/>
<rect x="163" y="366" width="1" height="21" fill="#ff0000" stroke="none"/>
<rect x="160" y="374" width="6" height="1" fill="#ff0000" stroke="none"/>
<rect x="170" y="357" width="1" height="5" fill="#ff0000" stroke="none"/>
<rect x="170" y="372" width="1" height="2" fill="#ff0000" stroke="none"/>
<rect x="167.5" y="362.5" width="5" height="10" stroke="#ff0000"/>
<rect x="177" y="364" width="1" height="14" fill="#008000" stroke="none"/>
<rect x="174" y="368" width="6" height="3" fill="#008000" stroke="none"/>
<rect x="184" y="359" width="1" height="1" fill="#ff0000" stroke="none"/>
<rect x="184" y="367" width="1" height="7" fill="#ff0000" stroke="none"/>
<rect x="181.5" y="360.5" width="5" height="7" stroke="#ff0000"/>
<rect x="191" y="355" width="1" height="7" fill="#008000" stroke="none"/>
<rect x="188" y="358" width="6" height="1" fill="#008000" stroke="none"/>
<rect x="198" y="361" width="1" height="11" fill="#ff0000" stroke="none"/>
<rect x="195" y="361" width="6" height="1" fill="#ff0000" stroke="none"/>
<rect x="205" y="357" width="1" height="20" fill="#008000" stroke="none"/>
<rect x="202" y="363" width="6" height="14" fill="#008000" stroke="none"/>
<rect x="212" y="344" width="1" height="3" fill="#ff0000" stroke="none"/>
<rect x="212" y="378" width="1" height="2" fill="#ff0000" stroke="none"/>
<rect x="209.5" y="347.5" width="5" height="31" stroke="#ff0000"/>
<rect x="219" y="333" width="1" height="4" fill="#ff0000" stroke="none"/>
<rect x="219" y="344" width="1" height="6" fill="#ff0000" stroke="none"/>
<rect x="216.5" y="337.5" width="5" height="7" stroke="#ff0000"/>
<rect x="226" y="330" width="1" height="13" fill="#ff0000" stroke="none"/>
<rect x="223" y="337" width="6" height="2" fill="#ff0000" stroke="none"/>
<rect x="233" y="334" width="1" height="9" fill="#008000" stroke="none"/>
<rect x="230" y="335" width="6" height="5" fill="#008000" stroke="none"/>
<rect x="240" y="334" width="1" height="17" fill="#008000" stroke="none"/>
<rect x="237" y="340" width="6" height="8" fill="#008000" stroke="none"/>
<rect x="247" y="341" width="1" height="14" fill="#008000" stroke="none"/>
<rect x="244" y="347" width="6" height="3" fill="#008000" stroke="none"/>
<rect x="254" y="348" width="1" height="12" fill="#008000" stroke="none"/>
<rect x="251" y="349" width="6" height="7" fill="#008000" stroke="none"/>
<rect x="261" y="346" width="1" height="1" fill="#ff0000" stroke="none"/>
<rect x="261" y="356" width="1" height="2" fill="#ff0000" stroke="none"/>
<rect x="258.5" y="347.5" width="5" height="9" stroke="#ff0000"/>
<rect x="268" y="340" width="1" height="1" fill="#ff0000" stroke="none"/>
<rect x="268" y="345" width="1" height="3" fill="#ff0000" stroke="none"/>
<rect x="265.5" y="341.5" width="5" height="4" stroke="#ff0000"/>
<rect x="275" y="338" width="1" height="14" fill="#008000" stroke="none"/>
<rect x="272" y="339" width="6" height="11" fill="#008000" stroke="none"/>
<rect x="282" y="340" width="1" height="1" fill="#ff0000" stroke="none"/>
<rect x="282" y="351" width="1" height="4" fill="#ff0000" stroke="none"/>
<rect x="279.5" y="341.5" width="5" height="10" stroke="#ff0000"/>
<rect x="289" y="318" width="1" height="2" fill="#ff0000" stroke="none"/>
<rect x="286.5" y="320.5" width="5" height="23" stroke="#ff0000"/>
<rect x="296" y="315" width="1" height="1" fill="#ff0000" stroke="none"/>
<rect x="296" y="319" width="1" height="3" fill="#ff0000" stroke="none"/>
<rect x="293.5" y="316.5" width="5" height="3" stroke="#ff0000"/>
<rect x="303" y="294" width="1" height="7" fill="#ff0000" stroke="none"/>
<rect x="303" y="316" width="1" height="5" fill="#ff0000" stroke="none"/>
<rect x="300.5" y="301.5" width="5" height="15" stroke="#ff0000"/>
<rect x="310" y="299" width="1" height="11" fill="#ff0000" stroke="none"/>
<rect x="307" y="303" width="6" height="1" fill="#ff0000" stroke="none"/>
<rect x="317" y="301" width="1" height="10" fill="#ff0000" stroke="none"/>
<rect x="314" y="303" width="6" height="2" fill="#ff0000" stroke="none"/>
<rect x="324" y="306" width="1" height="15" fill="#008000" stroke="none"/>
<rect x="321" y="306" width="6" height="13" fill="#008000" stroke="none"/>
<rect x="331" y="313" width="1" height="4" fill="#ff0000" stroke="none"/>
<rect x="331" y="321" width="1" height="3" fill="#ff0000" stroke="none"/>
<rect x="328.5" y="317.5" width="5" height="4" stroke="#ff0000"/>
<rect x="338" y="315" width="1" height="7" fill="#008000" stroke="none"/>
<rect x="335" y="315" width="6" height="6" fill="#008000" stroke="none"/>
<rect x="345" y="319" width="1" height="1" fill="#ff0000" stroke="none"/>
<rect x="345" y="324" width="1" height="6" fill="#ff0000" stroke="none"/>
<rect x="342.5" y="320.5" width="5" height="4" stroke="#ff0000"/>
<rect x="352" y="319" width="1" height="20" fill="#008000" stroke="none"/>
<rect x="349" y="327" width="6" height="10" fill="#008000" stroke="none"/>
<rect x="359" y="333" width="1" height="1" fill="#ff0000" stroke="none"/>
<rect x="359" y="338" width="1" height="10" fill="#ff0000" stroke="none"/>
<rect x="356.5" y="334.5" width="5" height="4" stroke="#ff0000"/>
<rect x="366" y="333" width="1" height="9" fill="#008000" stroke="none"/>
<rect x="363" y="336" width="6" height="1" fill="#008000" stroke="none"/>
<rect x="373" y="333" width="1" height="11" fill="#008000" stroke="none"/>
<rect x="370" y="338" width="6" height="5" fill="#008000" stroke="none"/>
<rect x="380" y="339" width="1" height="14" fill="#008000" stroke="none"/>
<rect x="377" y="340" width="6" height="13" fill="#008000" stroke="none"/>
<rect x="387" y="354" width="1" height="19" fill="#008000" stroke="none"/>
<rect x="384" y="355" width="6" height="15" fill="#008000" stroke="none"/>
<rect x="394" y="361" width="1" height="1" fill="#ff0000" stroke="none"/>
<rect x="394" y="370" width="1" height="5" fill="#ff0000" stroke="none"/>
<rect x="391.5" y="362.5" width="5" height="8" stroke="#ff0000"/>
<rect x="401" y="357" width="1" height="1" fill="#ff0000" stroke="none"/>
<rect x="401" y="360" width="1" height="5" fill="#ff0000" stroke="none"/>
<rect x="398.5" y="358.5" width="5" height="2" stroke="#ff0000"/>
<rect x="408" y="357" width="1" height="1" fill="#ff0000" stroke="none"/>
<rect x="408" y="360" width="1" height="9" fill="#ff0000" stroke="none"/>
<rect x="405.5" y="358.5" width="5" height="2" stroke="#ff0000"/>
<rect x="415" y="352" width="1" height="10" fill="#ff0000" stroke="none"/>
<rect x="412" y="357" width="6" height="2" fill="#ff0000" stroke="none"/>
<rect x="422" y="360" width="1" height="9" fill="#008000" stroke="none"/>
<rect x="419" y="360" width="6" height="8" fill="#008000" stroke="none"/>
<rect x="429" y="353" width="1" height="11" fill="#ff0000" stroke="none"/>
<rect x="426.5" y="364.5" width="5" height="5" stroke="#ff0000"/>
<rect x="436" y="362" width="1" height="11" fill="#008000" stroke="none"/>
<rect x="433" y="364" width="6" height="2" fill="#008000" stroke="none"/>
<rect x="443" y="343" width="1" height="1" fill="#ff0000" stroke="none"/>
<rect x="443" y="359" width="1" height="5" fill="#ff0000" stroke="none"/>
<rect x="440.5" y="344.5" width="5" height="15" stroke="#ff0000"/>
<rect x="450" y="341" width="1" height="9" fill="#008000" stroke="none"/>
<rect x="447" y="343" width="6" height="3" fill="#008000" stroke="none"/>
<rect x="457" y="343" width="1" height="8" fill="#008000" stroke="none"/>
<rect x="454" y="346" width="6" height="1" fill="#008000" stroke="none"/>
<rect x="464" y="348" width="1" height="13" fill="#008000" stroke="none"/>
<rect x="461" y="349" width="6" height="11" fill="#008000" stroke="none"/>
<rect x="471" y="358" width="1" height="9" fill="#ff0000" stroke="none"/>
<rect x="468" y="358" width="6" height="2" fill="#ff0000" stroke="none"/>
<rect x="478" y="360" width="1" height="15" fill="#008000" stroke="none"/>
<rect x="475" y="360" width="6" height="10" fill="#008000" stroke="none"/>
<rect x="485" y="364" width="1" height="8" fill="#008000" stroke="none"/>
<rect x="482" y="366" width="6" height="3" fill="#008000" stroke="none"/>
<rect x="492" y="372" width="1" height="6" fill="#ff0000" stroke="none"/>
<rect x="489.5" y="359.5" width="5" height="13" stroke="#ff0000"/>
<rect x="499" y="351" width="1" height="11" fill="#008000" stroke="none"/>
<rect x="496" y="360" width="6" height="2" fill="#008000" stroke="none"/>
<rect x="506" y="362" width="1" height="2" fill="#ff0000" stroke="none"/>
<rect x="503.5" y="354.5" width="5" height="8" stroke="#ff0000"/>
<rect x="513" y="349" width="1" height="6" fill="#008000" stroke="none"/>
<rect x="510" y="350" width="6" height="1" fill="#008000" stroke="none"/>
<rect x="520" y="350" width="1" height="6" fill="#008000" stroke="none"/>
<rect x="517" y="351" width="6" height="4" fill="#008000" stroke="none"/>
<rect x="527" y="344" width="1" height="2" fill="#ff0000" stroke="none"/>
<rect x="527" y="354" width="1" height="4" fill="#ff0000" stroke="none"/>
<rect x="524.5" y="346.5" width="5" height="8" stroke="#ff0000"/>
<rect x="534" y="343" width="1" height="9" fill="#008000" stroke="none"/>
<rect x="531" y="345" width="6" height="7" fill="#008000" stroke="none"/>
<rect x="541" y="348" width="1" height="9" fill="#008000" stroke="none"/>
<rect x="538" y="351" width="6" height="1" fill="#008000" stroke="none"/>
<rect x="548" y="347" width="1" height="7" fill="#008000" stroke="none"/>
<rect x="545" y="352" width="6" height="1" fill="#008000" stroke="none"/>
<rect x="555" y="352" width="1" height="14" fill="#008000" stroke="none"/>
<rect x="552" y="352" width="6" height="8" fill="#008000" stroke="none"/>
<rect x="562" y="350" width="1" height="1" fill="#ff0000" stroke="none"/>
<rect x="562" y="362" width="1" height="3" fill="#ff0000" stroke="none"/>
<rect x="559.5" y="351.5" width="5" height="11" stroke="#ff0000"/>
<rect x="569" y="351" width="1" height="11" fill="#008000" stroke="none"/>
<rect x="566" y="351" width="6" height="6" fill="#008000" stroke="none"/>
<rect x="576" y="348" width="1" height="9" fill="#ff0000" stroke="none"/>
<rect x="576" y="359" width="1" height="2" fill="#ff0000" stroke="none"/>
<rect x="573.5" y="357.5" width="5" height="2" stroke="#ff0000"/>
<rect x="583" y="354" width="1" height="5" fill="#ff0000" stroke="none"/>
<rect x="580.5" y="344.5" width="5" height="10" stroke="#ff0000"/>
<rect x="590" y="342" width="1" height="1" fill="#ff0000" stroke="none"/>
<rect x="590" y="346" width="1" height="3" fill="#ff0000" stroke="none"/>
<rect x="587.5" y="343.5" width="5" height="3" stroke="#ff0000"/>
<rect x="597" y="342" width="1" height="7" fill="#ff0000" stroke="none"/>
<rect x="594" y="345" width="6" height="1" fill="#ff0000" stroke="none"/>
<rect x="604" y="333" width="1" height="2" fill="#ff0000" stroke="none"/>
<rect x="601.5" y="335.5" width="5" height="11" stroke="#ff0000"/>
<rect x="611" y="326" width="1" height="1" fill="#ff0000" stroke="none"/>
<rect x="608.5" y="327.5" width="5" height="7" stroke="#ff0000"/>
<rect x="618" y="330" width="1" height="9" fill="#008000" stroke="none"/>
<rect x="615" y="330" width="6" height="7" fill="#008000" stroke="none"/>
<rect x="625" y="338" width="1" height="8" fill="#008000" stroke="none"/>
<rect x="622" y="338" width="6" height="6" fill="#008000" stroke="none"/>
<rect x="632" y="342" width="1" height="22" fill="#008000" stroke="none"/>
<rect x="629" y="343" width="6" height="18" fill="#008000" stroke="none"/>
<rect x="639" y="365" width="1" height="3" fill="#ff0000" stroke="none"/>
<rect x="636.5" y="358.5" width="5" height="7" stroke="#ff0000"/>
<rect x="646" y="356" width="1" height="5" fill="#008000" stroke="none"/>
<rect x="643" y="358" width="6" height="1" fill="#008000" stroke="none"/>
<rect x="653" y="360" width="1" height="2" fill="#ff0000" stroke="none"/>
<rect x="650.5" y="354.5" width="5" height="6" stroke="#ff0000"/>
<rect x="660" y="356" width="1" height="8" fill="#008000" stroke="none"/>
<rect x="657" y="356" width="6" height="4" fill="#008000" stroke="none"/>
<rect x="667" y="358" width="1" height="2" fill="#ff0000" stroke="none"/>
<rect x="664.5" y="352.5" width="5" height="6" stroke="#ff0000"/>
<rect x="674" y="349" width="1" height="10" fill="#ff0000" stroke="none"/>
<rect x="671" y="352" width="6" height="2" fill="#ff0000" stroke="none"/>
<rect x="681" y="345" width="1" height="2" fill="#ff0000" stroke="none"/>
<rect x="678.5" y="347.5" width="5" height="5" stroke="#ff0000"/>
<rect x="688" y="345" width="1" height="6" fill="#008000" stroke="none"/>
<rect x="685" y="345" width="6" height="2" fill="#008000" stroke="none"/>
<rect x="695" y="341" width="1" height="1" fill="#ff0000" stroke="none"/>
<rect x="695" y="345" width="1" height="4" fill="#ff0000" stroke="none"/>
<rect x="692.5" y="342.5" width="5" height="3" stroke="#ff0000"/>
<rect x="702" y="337" width="1" height="2" fill="#ff0000" stroke="none"/>
<rect x="702" y="344" width="1" height="4" fill="#ff0000" stroke="none"/>
<rect x="699.5" y="339.5" width="5" height="5" stroke="#ff0000"/>
<rect x="709" y="339" width="1" height="6" fill="#008000" stroke="none"/>
<rect x="706" y="339" width="6" height="2" fill="#008000" stroke="none"/>
<rect x="716" y="338" width="1" height="8" fill="#ff0000" stroke="none"/>
<rect x="713" y="341" width="6" height="1" fill="#ff0000" stroke="none"/>
<rect x="723" y="338" width="1" height="10" fill="#ff0000" stroke="none"/>
<rect x="720" y="338" width="6" height="2" fill="#ff0000" stroke="none"/>
<rect x="730" y="340" width="1" height="13" fill="#008000" stroke="none"/>
<rect x="727" y="340" width="6" height="13" fill="#008000" stroke="none"/>
<rect x="737" y="348" width="1" height="6" fill="#ff0000" stroke="none"/>
<rect x="734" y="350" width="6" height="1" fill="#ff0000" stroke="none"/>
<rect x="744" y="345" width="1" height="2" fill="#ff0000" stroke="none"/>
<rect x="744" y="353" width="1" height="2" fill="#ff0000" stroke="none"/>
<rect x="741.5" y="347.5" width="5" height="6" stroke="#ff0000"/>
<rect x="751" y="346" width="1" height="3" fill="#ff0000" stroke="none"/>
<rect x="748.5" y="337.5" width="5" height="9" stroke="#ff0000"/>
<rect x="758" y="335" width="1" height="7" fill="#ff0000" stroke="none"/>
<rect x="755" y="335" width="6" height="2" fill="#ff0000" stroke="none"/>
<rect x="765" y="333" width="1" height="8" fill="#008000" stroke="none"/>
<rect x="762" y="336" width="6" height="1" fill="#008000" stroke="none"/>
<rect x="772" y="339" width="1" height="10" fill="#008000" stroke="none"/>
<rect x="769" y="339" width="6" height="5" fill="#008000" stroke="none"/>
<rect x="779" y="337" width="1" height="4" fill="#ff0000" stroke="none"/>
<rect x="779" y="346" width="1" height="3" fill="#ff0000" stroke="none"/>
<rect x="776.5" y="341.5" width="5" height="5" stroke="#ff0000"/>
<rect x="786" y="341" width="1" height="6" fill="#008000" stroke="none"/>
<rect x="783" y="342" width="6" height="1" fill="#008000" stroke="none"/>
<rect x="793" y="331" width="1" height="1" fill="#ff0000" stroke="none"/>
<rect x="790.5" y="332.5" width="5" height="13" stroke="#ff0000"/>
<rect x="800" y="326" width="1" height="8" fill="#ff0000" stroke="none"/>
<rect x="797" y="331" width="6" height="2" fill="#ff0000" stroke="none"/>
<rect x="807" y="315" width="1" height="2" fill="#ff0000" stroke="none"/>
<rect x="804.5" y="317.5" width="5" height="12" stroke="#ff0000"/>
<rect x="814" y="314" width="1" height="3" fill="#ff0000" stroke="none"/>
<rect x="811.5" y="306.5" width="5" height="8" stroke="#ff0000"/>
<rect x="821" y="276" width="1" height="2" fill="#ff0000" stroke="none"/>
<rect x="818.5" y="278.5" width="5" height="22" stroke="#ff0000"/>
<rect x="828" y="270" width="1" height="12" fill="#ff0000" stroke="none"/>
<rect x="825" y="275" width="6" height="2" fill="#ff0000" stroke="none"/>
<rect x="835" y="269" width="1" height="10" fill="#ff0000" stroke="none"/>
<rect x="832" y="276" width="6" height="2" fill="#ff0000" stroke="none"/>
<rect x="842" y="264" width="1" height="1" fill="#ff0000" stroke="none"/>
<rect x="842" y="276" width="1" height="5" fill="#ff0000" stroke="none"/>
<rect x="839.5" y="265.5" width="5" height="11" stroke="#ff0000"/>
<rect x="849" y="257" width="1" height="17" fill="#008000" stroke="none"/>
<rect x="846" y="270" width="6" height="4" fill="#008000" stroke="none"/>
<rect x="856" y="253" width="1" height="2" fill="#ff0000" stroke="none"/>
<rect x="856" y="270" width="1" height="4" fill="#ff0000" stroke="none"/>
<rect x="853.5" y="255.5" width="5" height="15" stroke="#ff0000"/>
<rect x="863" y="253" width="1" height="11" fill="#008000" stroke="none"/>
<rect x="860" y="253" width="6" height="3" fill="#008000" stroke="none"/>
<rect x="870" y="254" width="1" height="3" fill="#ff0000" stroke="none"/>
<rect x="870" y="260" width="1" height="10" fill="#ff0000" stroke="none"/>
<rect x="867.5" y="257.5" width="5" height="3" stroke="#ff0000"/>
<rect x="877" y="256" width="1" height="19" fill="#008000" stroke="none"/>
<rect x="874" y="257" width="6" height="17" fill="#008000" stroke="none"/>
<rect x="884" y="266" width="1" height="3" fill="#ff0000" stroke="none"/>
<rect x="884" y="272" width="1" height="5" fill="#ff0000" stroke="none"/>
<rect x="881.5" y="269.5" width="5" height="3" stroke="#ff0000"/>
<rect x="891" y="252" width="1" height="1" fill="#ff0000" stroke="none"/>
<rect x="888.5" y="253.5" width="5" height="13" stroke="#ff0000"/>
<rect x="898" y="254" width="1" height="7" fill="#008000" stroke="none"/>
<rect x="895" y="254" width="6" height="1" fill="#008000" stroke="none"/>
<rect x="905" y="251" width="1" height="15" fill="#008000" stroke="none"/>
<rect x="902" y="254" width="6" height="1" fill="#008000" stroke="none"/>
<rect x="912" y="251" width="1" height="13" fill="#008000" stroke="none"/>
<rect x="909" y="255" width="6" height="9" fill="#008000" stroke="none"/>
<rect x="919" y="250" width="1" height="2" fill="#ff0000" stroke="none"/>
<rect x="919" y="262" width="1" height="2" fill="#ff0000" stroke="none"/>
<rect x="916.5" y="252.5" width="5" height="10" stroke="#ff0000"/>
<rect x="926" y="244" width="1" height="2" fill="#ff0000" stroke="none"/>
<rect x="926" y="250" width="1" height="2" fill="#ff0000" stroke="none"/>
<rect x="923.5" y="246.5" width="5" height="4" stroke="#ff0000"/>
<rect x="933" y="243" width="1" height="9" fill="#ff0000" stroke="none"/>
<rect x="930" y="243" width="6" height="2" fill="#ff0000" stroke="none"/>
<rect x="940" y="241" width="1" height="8" fill="#008000" stroke="none"/>
<rect x="937" y="244" width="6" height="1" fill="#008000" stroke="none"/>
<rect x="947" y="245" width="1" height="16" fill="#008000" stroke="none"/>
<rect x="944" y="245" width="6" height="5" fill="#008000" stroke="none"/>
<rect x="954" y="243" width="1" height="2" fill="#ff0000" stroke="none"/>
<rect x="954" y="251" width="1" height="2" fill="#ff0000" stroke="none"/>
<rect x="951.5" y="245.5" width="5" height="6" stroke="#ff0000"/>
<rect x="961" y="244" width="1" height="11" fill="#008000" stroke="none"/>
<rect x="958" y="244" width="6" height="8" fill="#008000" stroke="none"/>
<rect x="968" y="250" width="1" height="17" fill="#008000" stroke="none"/>
<rect x="965" y="253" width="6" height="10" fill="#008000" stroke="none"/>
<rect x="975" y="257" width="1" height="7" fill="#ff0000" stroke="none"/>
<rect x="972" y="260" width="6" height="2" fill="#ff0000" stroke="none"/>
<rect x="982" y="258" width="1" height="11" fill="#008000" stroke="none"/>
<rect x="979" y="261" width="6" height="8" fill="#008000" stroke="none"/>
<rect x="989" y="256" width="1" height="1" fill="#ff0000" stroke="none"/>
<rect x="989" y="266" width="1" height="4" fill="#ff0000" stroke="none"/>
<rect x="986.5" y="257.5" width="5" height="9" stroke="#ff0000"/>
<rect x="996" y="255" width="1" height="2" fill="#ff0000" stroke="none"/>
<rect x="993.5" y="247.5" width="5" height="8" stroke="#ff0000"/>
<rect x="1003" y="230" width="1" height="2" fill="#ff0000" stroke="none"/>
<rect x="1003" y="244" width="1" height="4" fill="#ff0000" stroke="none"/>
<rect x="1000.5" y="232.5" width="5" height="12" stroke="#ff0000"/>
<rect x="1010" y="218" width="1" height="1" fill="#ff0000" stroke="none"/>
<rect x="1007.5" y="219.5" width="5" height="10" stroke="#ff0000"/>
<rect x="1017" y="217" width="1" height="5" fill="#ff0000" stroke="none"/>
<rect x="1014.5" y="210.5" width="5" height="7" stroke="#ff0000"/>
<rect x="1024" y="207" width="1" height="3" fill="#ff0000" stroke="none"/>
<rect x="1021.5" y="199.5" width="5" height="8" stroke="#ff0000"/>
<rect x="69" y="557" width="6" height="33" fill="#008000" stroke="none"/>
<rect x="76" y="555" width="6" height="35" fill="#008000" stroke="none"/>
<rect x="83" y="551" width="6" height="39" fill="#008000" stroke="none"/>
<rect x="90.5" y="559.5" width="5" height="30" stroke="#ff0000"/>
<rect x="97.5" y="554.5" width="5" height="35" stroke="#ff0000"/>
<rect x="104.5" y="559.5" width="5" height="30" stroke="#ff0000"/>
<rect x="111.5" y="554.5" width="5" height="35" stroke="#ff0000"/>
<rect x="118.5" y="559.5" width="5" height="30" stroke="#ff0000"/>
<rect x="125" y="560" width="6" height="30" fill="#008000" stroke="none"/>
<rect x="132.5" y="559.5" width="5" height="30" stroke="#ff0000"/>
<rect x="139" y="561" width="6" height="29" fill="#008000" stroke="none"/>
<rect x="146" y="558" width="6" height="32" fill="#008000" stroke="none"/>
<rect x="153.5" y="564.5" width="5" height="25" stroke="#ff0000"/>
<rect x="160.5" y="562.5" width="5" height="27" stroke="#ff0000"/>
<rect x="167.5" y="562.5" width="5" height="27" stroke="#ff0000"/>
<rect x="174" y="565" width="6" height="25" fill="#008000" stroke="none"/>
<rect x="181.5" y="566.5" width="5" height="23" stroke="#ff0000"/>
<rect x="188" y="563" width="6" height="27" fill="#008000" stroke="none"/>
<rect x="195.5" y="564.5" width="5" height="25" stroke="#ff0000"/>
<rect x="202" y="559" width="6" height="31" fill="#008000" stroke="none"/>
<rect x="209.5" y="551.5" width="5" height="38" stroke="#ff0000"/>
<rect x="216.5" y="549.5" width="5" height="40" stroke="#ff0000"/>
<rect x="223.5" y="553.5" width="5" height="36" stroke="#ff0000"/>
<rect x="230" y="561" width="6" height="29" fill="#008000" stroke="none"/>
<rect x="237" y="557" width="6" height="33" fill="#008000" stroke="none"/>
<rect x="244" y="556" width="6" height="34" fill="#008000" stroke="none"/>
<rect x="251" y="564" width="6" height="26" fill="#008000" stroke="none"/>
<rect x="258.5" y="568.5" width="5" height="21" stroke="#ff0000"/>
<rect x="265.5" y="561.5" width="5" height="28" stroke="#ff0000"/>
<rect x="272" y="560" width="6" height="30" fill="#008000" stroke="none"/>
<rect x="279.5" y="568.5" width="5" height="21" stroke="#ff0000"/>
<rect x="286.5" y="553.5" width="5" height="36" stroke="#ff0000"/>
<rect x="293.5" y="561.5" width="5" height="28" stroke="#ff0000"/>
<rect x="300.5" y="546.5" width="5" height="43" stroke="#ff0000"/>
<rect x="307.5" y="553.5" width="5" height="36" stroke="#ff0000"/>
<rect x="314.5" y="561.5" width="5" height="28" stroke="#ff0000"/>
<rect x="321" y="560" width="6" height="30" fill="#008000" stroke="none"/>
<rect x="328.5" y="565.5" width="5" height="24" stroke="#ff0000"/>
<rect x="335" y="565" width="6" height="25" fill="#008000" stroke="none"/>
<rect x="342.5" y="565.5" width="5" height="24" stroke="#ff0000"/>
<rect x="349" y="563" width="6" height="27" fill="#008000" stroke="none"/>
<rect x="356.5" y="562.5" width="5" height="27" stroke="#ff0000"/>
<rect x="363" y="568" width="6" height="22" fill="#008000" stroke="none"/>
<rect x="370" y="568" width="6" height="22" fill="#008000" stroke="none"/>
<rect x="377" y="564" width="6" height="26" fill="#008000" stroke="none"/>
<rect x="384" y="565" width="6" height="25" fill="#008000" stroke="none"/>
<rect x="391.5" y="569.5" width="5" height="20" stroke="#ff0000"/>
<rect x="398.5" y="569.5" width="5" height="20" stroke="#ff0000"/>
<rect x="405.5" y="569.5" width="5" height="20" stroke="#ff0000"/>
<rect x="412.5" y="569.5" width="5" height="20" stroke="#ff0000"/>
<rect x="419" y="569" width="6" height="21" fill="#008000" stroke="none"/>
<rect x="426.5" y="569.5" width="5" height="20" stroke="#ff0000"/>
<rect x="433" y="569" width="6" height="21" fill="#008000" stroke="none"/>
<rect x="440.5" y="559.5" width="5" height="30" stroke="#ff0000"/>
<rect x="447" y="563" width="6" height="27" fill="#008000" stroke="none"/>
<rect x="454" y="570" width="6" height="20" fill="#008000" stroke="none"/>
<rect x="461" y="569" width="6" height="21" fill="#008000" stroke="none"/>
<rect x="468.5" y="571.5" width="5" height="18" stroke="#ff0000"/>
<rect x="475" y="572" width="6" height="18" fill="#008000" stroke="none"/>
<rect x="482" y="573" width="6" height="17" fill="#008000" stroke="none"/>
<rect x="489.5" y="573.5" width="5" height="16" stroke="#ff0000"/>
<rect x="496" y="569" width="6" height="21" fill="#008000" stroke="none"/>
<rect x="503.5" y="572.5" width="5" height="17" stroke="#ff0000"/>
<rect x="510" y="570" width="6" height="20" fill="#008000" stroke="none"/>
<rect x="517" y="571" width="6" height="19" fill="#008000" stroke="none"/>
<rect x="524.5" y="567.5" width="5" height="22" stroke="#ff0000"/>
<rect x="531" y="567" width="6" height="23" fill="#008000" stroke="none"/>
<rect x="538" y="569" width="6" height="21" fill="#008000" stroke="none"/>
<rect x="545" y="570" width="6" height="20" fill="#008000" stroke="none"/>
<rect x="552" y="570" width="6" height="20" fill="#008000" stroke="none"/>
<rect x="559.5" y="571.5" width="5" height="18" stroke="#ff0000"/>
<rect x="566" y="572" width="6" height="18" fill="#008000" stroke="none"/>
<rect x="573.5" y="573.5" width="5" height="16" stroke="#ff0000"/>
<rect x="580.5" y="569.5" width="5" height="20" stroke="#ff0000"/>
<rect x="587.5" y="569.5" width="5" height="20" stroke="#ff0000"/>
<rect x="594.5" y="567.5" width="5" height="22" stroke="#ff0000"/>
<rect x="601.5" y="563.5" width="5" height="26" stroke="#ff0000"/>
<rect x="608.5" y="563.5" width="5" height="26" stroke="#ff0000"/>
<rect x="615" y="565" width="6" height="25" fill="#008000" stroke="none"/>
<rect x="622" y="566" width="6" height="24" fill="#008000" stroke="none"/>
<rect x="629" y="564" width="6" height="26" fill="#008000" stroke="none"/>
<rect x="636.5" y="571.5" width="5" height="18" stroke="#ff0000"/>
<rect x="643" y="570" width="6" height="20" fill="#008000" stroke="none"/>
<rect x="650.5" y="570.5" width="5" height="19" stroke="#ff0000"/>
<rect x="657" y="571" width="6" height="19" fill="#008000" stroke="none"/>
<rect x="664.5" y="567.5" width="5" height="22" stroke="#ff0000"/>
<rect x="671.5" y="563.5" width="5" height="26" stroke="#ff0000"/>
<rect x="678.5" y="563.5" width="5" height="26" stroke="#ff0000"/>
<rect x="685" y="562" width="6" height="28" fill="#008000" stroke="none"/>
<rect x="692.5" y="559.5" width="5" height="30" stroke="#ff0000"/>
<rect x="699.5" y="556.5" width="5" height="33" stroke="#ff0000"/>
<rect x="706" y="561" width="6" height="29" fill="#008000" stroke="none"/>
<rect x="713.5" y="563.5" width="5" height="26" stroke="#ff0000"/>
<rect x="720.5" y="563.5" width="5" height="26" stroke="#ff0000"/>
<rect x="727" y="558" width="6" height="32" fill="#008000" stroke="none"/>
<rect x="734.5" y="563.5" width="5" height="26" stroke="#ff0000"/>
<rect x="741.5" y="561.5" width="5" height="28" stroke="#ff0000"/>
<rect x="748.5" y="559.5" width="5" height="30" stroke="#ff0000"/>
<rect x="755.5" y="555.5" width="5" height="34" stroke="#ff0000"/>
<rect x="762" y="552" width="6" height="38" fill="#008000" stroke="none"/>
<rect x="769" y="561" width="6" height="29" fill="#008000" stroke="none"/>
<rect x="776.5" y="560.5" width="5" height="29" stroke="#ff0000"/>
<rect x="783" y="564" width="6" height="26" fill="#008000" stroke="none"/>
<rect x="790.5" y="556.5" width="5" height="33" stroke="#ff0000"/>
<rect x="797.5" y="552.5" width="5" height="37" stroke="#ff0000"/>
<rect x="804.5" y="544.5" width="5" height="45" stroke="#ff0000"/>
<rect x="811.5" y="550.5" width="5" height="39" stroke="#ff0000"/>
<rect x="818.5" y="524.5" width="5" height="65" stroke="#ff0000"/>
<rect x="825.5" y="534.5" width="5" height="55" stroke="#ff0000"/>
<rect x="832.5" y="538.5" width="5" height="51" stroke="#ff0000"/>
<rect x="839.5" y="544.5" width="5" height="45" stroke="#ff0000"/>
<rect x="846" y="536" width="6" height="54" fill="#008000" stroke="none"/>
<rect x="853.5" y="541.5" width="5" height="48" stroke="#ff0000"/>
<rect x="860" y="541" width="6" height="49" fill="#008000" stroke="none"/>
<rect x="867.5" y="540.5" width="5" height="49" stroke="#ff0000"/>
<rect x="874" y="541" width="6" height="49" fill="#008000" stroke="none"/>
<rect x="881.5" y="552.5" width="5" height="37" stroke="#ff0000"/>
<rect x="888.5" y="548.5" width="5" height="41" stroke="#ff0000"/>
<rect x="895" y="547" width="6" height="43" fill="#008000" stroke="none"/>
<rect x="902" y="540" width="6" height="50" fill="#008000" stroke="none"/>
<rect x="909" y="542" width="6" height="48" fill="#008000" stroke="none"/>
<rect x="916.5" y="548.5" width="5" height="41" stroke="#ff0000"/>
<rect x="923.5" y="544.5" width="5" height="45" stroke="#ff0000"/>
<rect x="930.5" y="540.5" width="5" height="49" stroke="#ff0000"/>
<rect x="937" y="543" width="6" height="47" fill="#008000" stroke="none"/>
<rect x="944" y="544" width="6" height="46" fill="#008000" stroke="none"/>
<rect x="951.5" y="546.5" width="5" height="43" stroke="#ff0000"/>
<rect x="958" y="545" width="6" height="45" fill="#008000" stroke="none"/>
<rect x="965" y="544" width="6" height="46" fill="#008000" stroke="none"/>
<rect x="972.5" y="556.5" width="5" height="33" stroke="#ff0000"/>
<rect x="979" y="555" width="6" height="35" fill="#008000" stroke="none"/>
<rect x="986.5" y="561.5" width="5" height="28" stroke="#ff0000"/>
<rect x="993.5" y="554.5" width="5" height="35" stroke="#ff0000"/>
<rect x="1000.5" y="537.5" width="5" height="52" stroke="#ff0000"/>
<rect x="1007.5" y="531.5" width="5" height="58" stroke="#ff0000"/>
<rect x="1014.5" y="534.5" width="5" height="55" stroke="#ff0000"/>
<rect x="1021.5" y="530.5" width="5" height="59" stroke="#ff0000"/>
<rect x="72" y="638" width="1" height="22" fill="#ff0000" stroke="none"/>
<rect x="79" y="649" width="1" height="11" fill="#ff0000" stroke="none"/>
<rect x="86" y="659" width="1" height="3" fill="#008000" stroke="none"/>
<rect x="93" y="659" width="1" height="10" fill="#008000" stroke="none"/>
<rect x="100" y="659" width="1" height="13" fill="#008000" stroke="none"/>
<rect x="107" y="659" width="1" height="13" fill="#008000" stroke="none"/>
<rect x="114" y="659" width="1" height="10" fill="#008000" stroke="none"/>
<rect x="121" y="659" width="1" height="9" fill="#008000" stroke="none"/>
<rect x="128" y="659" width="1" height="10" fill="#008000" stroke="none"/>
<rect x="135" y="659" width="1" height="9" fill="#008000" stroke="none"/>
<rect x="142" y="659" width="1" height="7" fill="#008000" stroke="none"/>
<rect x="149" y="659" width="1" height="15" fill="#008000" stroke="none"/>
<rect x="156" y="659" width="1" height="19" fill="#008000" stroke="none"/>
<rect x="163" y="659" width="1" height="21" fill="#008000" stroke="none"/>
<rect x="170" y="659" width="1" height="18" fill="#008000" stroke="none"/>
<rect x="177" y="659" width="1" height="16" fill="#008000" stroke="none"/>
<rect x="184" y="659" width="1" height="12" fill="#008000" stroke="none"/>
<rect x="191" y="659" width="1" height="8" fill="#008000" stroke="none"/>
<rect x="198" y="659" width="1" height="4" fill="#008000" stroke="none"/>
<rect x="205" y="659" width="1" height="7" fill="#008000" stroke="none"/>
<rect x="212" y="659" width="1" height="1" fill="#ff0000" stroke="none"/>
<rect x="219" y="651" width="1" height="9" fill="#ff0000" stroke="none"/>
<rect x="226" y="646" width="1" height="14" fill="#ff0000" stroke="none"/>
<rect x="233" y="644" width="1" height="16" fill="#ff0000" stroke="none"/>
<rect x="240" y="646" width="1" height="14" fill="#ff0000" stroke="none"/>
<rect x="247" y="648" width="1" height="12" fill="#ff0000" stroke="none"/>
<rect x="254" y="652" width="1" height="8" fill="#ff0000" stroke="none"/>
<rect x="261" y="652" width="1" height="8" fill="#ff0000" stroke="none"/>
<rect x="268" y="650" width="1" height="10" fill="#ff0000" stroke="none"/>
<rect x="275" y="652" width="1" height="8" fill="#ff0000" stroke="none"/>
<rect x="282" y="651" width="1" height="9" fill="#ff0000" stroke="none"/>
<rect x="289" y="645" width="1" height="15" fill="#ff0000" stroke="none"/>
<rect x="296" y="641" width="1" height="19" fill="#ff0000" stroke="none"/>
<rect x="303" y="635" width="1" height="25" fill="#ff0000" stroke="none"/>
<rect x="310" y="633" width="1" height="27" fill="#ff0000" stroke="none"/>
<rect x="317" y="633" width="1" height="27" fill="#ff0000" stroke="none"/>
<rect x="324" y="639" width="1" height="21" fill="#ff0000" stroke="none"/>
<rect x="331" y="644" width="1" height="16" fill="#ff0000" stroke="none"/>
<rect x="338" y="649" width="1" height="11" fill="#ff0000" stroke="none"/>
<rect x="345" y="653" width="1" height="7" fill="#ff0000" stroke="none"/>
<rect x="359" y="659" width="1" height="5" fill="#008000" stroke="none"/>
<rect x="366" y="659" width="1" height="9" fill="#008000" stroke="none"/>
<rect x="373" y="659" width="1" height="12" fill="#008000" stroke="none"/>
<rect x="380" y="659" width="1" height="17" fill="#008000" stroke="none"/>
<rect x="387" y="659" width="1" height="21" fill="#008000" stroke="none"/>
<rect x="394" y="659" width="1" height="21" fill="#008000" stroke="none"/>
<rect x="401" y="659" width="1" height="21" fill="#008000" stroke="none"/>
<rect x="408" y="659" width="1" height="21" fill="#008000" stroke="none"/>
<rect x="415" y="659" width="1" height="18" fill="#008000" stroke="none"/>
<rect x="422" y="659" width="1" height="18" fill="#008000" stroke="none"/>
<rect x="429" y="659" width="1" height="16" fill="#008000" stroke="none"/>
<rect x="436" y="659" width="1" height="15" fill="#008000" stroke="none"/>
<rect x="443" y="659" width="1" height="6" fill="#008000" stroke="none"/>
<rect x="457" y="659" width="1" height="1" fill="#ff0000" stroke="none"/>
<rect x="464" y="659" width="1" height="1" fill="#ff0000" stroke="none"/>
<rect x="471" y="659" width="1" height="1" fill="#ff0000" stroke="none"/>
<rect x="478" y="659" width="1" height="2" fill="#008000" stroke="none"/>
<rect x="485" y="659" width="1" height="4" fill="#008000" stroke="none"/>
<rect x="492" y="659" width="1" height="2" fill="#008000" stroke="none"/>
<rect x="506" y="658" width="1" height="2" fill="#ff0000" stroke="none"/>
<rect x="513" y="655" width="1" height="5" fill="#ff0000" stroke="none"/>
<rect x="520" y="654" width="1" height="6" fill="#ff0000" stroke="none"/>
<rect x="527" y="651" width="1" height="9" fill="#ff0000" stroke="none"/>
<rect x="534" y="651" width="1" height="9" fill="#ff0000" stroke="none"/>
<rect x="541" y="652" width="1" height="8" fill="#ff0000" stroke="none"/>
<rect x="548" y="652" width="1" height="8" fill="#ff0000" stroke="none"/>
<rect x="555" y="655" width="1" height="5" fill="#ff0000" stroke="none"/>
<rect x="562" y="654" width="1" height="6" fill="#ff0000" stroke="none"/>
<rect x="569" y="656" width="1" height="4" fill="#ff0000" stroke="none"/>
<rect x="576" y="657" width="1" height="3" fill="#ff0000" stroke="none"/>
<rect x="583" y="654" width="1" height="6" fill="#ff0000" stroke="none"/>
<rect x="590" y="652" width="1" height="8" fill="#ff0000" stroke="none"/>
<rect x="597" y="652" width="1" height="8" fill="#ff0000" stroke="none"/>
<rect x="604" y="649" width="1" height="11" fill="#ff0000" stroke="none"/>
<rect x="611" y="646" width="1" height="14" fill="#ff0000" stroke="none"/>
<rect x="618" y="647" width="1" height="13" fill="#ff0000" stroke="none"/>
<rect x="625" y="651" width="1" height="9" fill="#ff0000" stroke="none"/>
<rect x="632" y="658" width="1" height="2" fill="#ff0000" stroke="none"/>
<rect x="639" y="659" width="1" height="2" fill="#008000" stroke="none"/>
<rect x="646" y="659" width="1" height="4" fill="#008000" stroke="none"/>
<rect x="653" y="659" width="1" height="4" fill="#008000" stroke="none"/>
<rect x="660" y="659" width="1" height="7" fill="#008000" stroke="none"/>
<rect x="667" y="659" width="1" height="4" fill="#008000" stroke="none"/>
<rect x="674" y="659" width="1" height="3" fill="#008000" stroke="none"/>
<rect x="688" y="659" width="1" height="1" fill="#ff0000" stroke="none"/>
<rect x="695" y="657" width="1" height="3" fill="#ff0000" stroke="none"/>
<rect x="702" y="655" width="1" height="5" fill="#ff0000" stroke="none"/>
<rect x="709" y="654" width="1" height="6" fill="#ff0000" stroke="none"/>
<rect x="716" y="654" width="1" height="6" fill="#ff0000" stroke="none"/>
<rect x="723" y="654" width="1" height="6" fill="#ff0000" stroke="none"/>
<rect x="730" y="658" width="1" height="2" fill="#ff0000" stroke="none"/>
<rect x="751" y="658" width="1" height="2" fill="#ff0000" stroke="none"/>
<rect x="758" y="656" width="1" height="4" fill="#ff0000" stroke="none"/>
<rect x="765" y="655" width="1" height="5" fill="#ff0000" stroke="none"/>
<rect x="772" y="657" width="1" height="3" fill="#ff0000" stroke="none"/>
<rect x="779" y="658" width="1" height="2" fill="#ff0000" stroke="none"/>
<rect x="786" y="659" width="1" height="1" fill="#ff0000" stroke="none"/>
<rect x="793" y="657" width="1" height="3" fill="#ff0000" stroke="none"/>
<rect x="800" y="655" width="1" height="5" fill="#ff0000" stroke="none"/>
<rect x="807" y="651" width="1" height="9" fill="#ff0000" stroke="none"/>
<rect x="814" y="645" width="1" height="15" fill="#ff0000" stroke="none"/>
<rect x="821" y="636" width="1" height="24" fill="#ff0000" stroke="none"/>
<rect x="828" y="629" width="1" height="31" fill="#ff0000" stroke="none"/>
<rect x="835" y="628" width="1" height="32" fill="#ff0000" stroke="none"/>
<rect x="842" y="626" width="1" height="34" fill="#ff0000" stroke="none"/>
<rect x="849" y="629" width="1" height="31" fill="#ff0000" stroke="none"/>
<rect x="856" y="628" width="1" height="32" fill="#ff0000" stroke="none"/>
<rect x="863" y="630" width="1" height="30" fill="#ff0000" stroke="none"/>
<rect x="870" y="633" width="1" height="27" fill="#ff0000" stroke="none"/>
<rect x="877" y="642" width="1" height="18" fill="#ff0000" stroke="none"/>
<rect x="884" y="648" width="1" height="12" fill="#ff0000" stroke="none"/>
<rect x="891" y="649" width="1" height="11" fill="#ff0000" stroke="none"/>
<rect x="898" y="651" width="1" height="9" fill="#ff0000" stroke="none"/>
<rect x="905" y="654" width="1" height="6" fill="#ff0000" stroke="none"/>
<rect x="912" y="659" width="1" height="1" fill="#ff0000" stroke="none"/>
<rect x="933" y="659" width="1" height="1" fill="#ff0000" stroke="none"/>
<rect x="947" y="659" width="1" height="4" fill="#008000" stroke="none"/>
<rect x="954" y="659" width="1" height="4" fill="#008000" stroke="none"/>
<rect x="961" y="659" width="1" height="7" fill="#008000" stroke="none"/>
<rect x="968" y="659" width="1" height="12" fill="#008000" stroke="none"/>
<rect x="975" y="659" width="1" height="15" fill="#008000" stroke="none"/>
<rect x="982" y="659" width="1" height="20" fill="#008000" stroke="none"/>
<rect x="989" y="659" width="1" height="18" fill="#008000" stroke="none"/>
<rect x="996" y="659" width="1" height="15" fill="#008000" stroke="none"/>
<rect x="1003" y="659" width="1" height="8" fill="#008000" stroke="none"/>
<rect x="1017" y="653" width="1" height="7" fill="#ff0000" stroke="none"/>
<rect x="1024" y="646" width="1" height="14" fill="#ff0000" stroke="none"/>
<rect x="1031" y="644" width="1" height="16" fill="#ff0000" stroke="none"/>
<rect x="1038" y="643" width="1" height="17" fill="#ff0000" stroke="none"/>
<rect x="1045" y="645" width="1" height="15" fill="#ff0000" stroke="none"/>
<rect x="1052" y="647" width="1" height="13" fill="#ff0000" stroke="none"/>
<rect x="1059" y="650" width="1" height="10" fill="#ff0000" stroke="none"/>
<rect x="1066" y="653" width="1" height="7" fill="#ff0000" stroke="none"/>
<rect x="1073" y="656" width="1" height="4" fill="#ff0000" stroke="none"/>
<rect x="1080" y="659" width="1" height="1" fill="#ff0000" stroke="none"/>
<rect x="1087" y="659" width="1" height="2" fill="#008000" stroke="none"/>
<rect x="1094" y="659" width="1" height="4" fill="#008000" stroke="none"/>
<rect x="1101" y="659" width="1" height="6" fill="#008000" stroke="none"/>
<rect x="1108" y="659" width="1" height="7" fill="#008000" stroke="none"/>
<rect x="1115" y="659" width="1" height="8" fill="#008000" stroke="none"/>
<rect x="1122" y="659" width="1" height="10" fill="#008000" stroke="none"/>
<rect x="1129" y="659" width="1" height="11" fill="#008000" stroke="none"/>
<rect x="1136" y="659" width="1" height="12" fill="#008000" stroke="none"/>
<rect x="1143" y="659" width="1" height="12" fill="#008000" stroke="none"/>
<rect x="1150" y="659" width="1" height="12" fill="#008000" stroke="none"/>
<rect x="1157" y="659" width="1" height="12" fill="#008000" stroke="none"/>
<rect x="1164" y="659" width="1" height="12" fill="#008000" stroke="none"/>
<rect x="1171" y="659" width="1" height="12" fill="#008000" stroke="none"/>
<rect x="1178" y="659" width="1" height="12" fill="#008000" stroke="none"/>
<rect x="1185" y="659" width="1" height="11" fill="#008000" stroke="none"/>
<rect x="1192" y="659" width="1" height="11" fill="#008000" stroke="none"/>
<rect x="1199" y="659" width="1" height="11" fill="#008000" stroke="none"/>
<rect x="1206" y="659" width="1" height="10" fill="#008000" stroke="none"/>
<rect x="1213" y="659" width="1" height="10" fill="#008000" stroke="none"/>
<rect x="1220" y="659" width="1" height="9" fill="#008000" stroke="none"/>
<rect x="1227" y="659" width="1" height="8" fill="#008000" stroke="none"/>
<rect x="1234" y="659" width="1" height="7" fill="#008000" stroke="none"/>
<line x1="1027" y1="199.5" x2="1239" y2="199.5" stroke="#808080" stroke-dasharray="6,3"/>
<polyline points="72.0,218.2 80.0,218.0 86.2,216.2 91.2,218.2 97.5,220.0 107.5,220.5 120.0,223.2 131.0,223.7 142.5,226.2 147.5,225.0 156.0,227.0 170.0,227.5 182.5,230.5 196.0,233.2 204.0,232.5 216.0,230.5 226.0,230.5 232.5,231.7 242.5,230.5 257.5,230.0 272.5,228.7 281.0,227.0 289.0,224.2 295.0,225.5 302.5,223.0 312.5,221.7 322.5,219.2 335.0,217.5 347.5,217.0 355.0,217.5 360.0,218.2 372.5,219.2 383.7,218.7 390.0,218.2 397.5,221.2 407.5,225.7 417.5,229.5 430.0,234.5 445.0,235.5 457.5,238.2 472.5,239.5 490.0,243.0 505.0,243.7 518.7,247.0 527.5,246.2 542.5,246.2 555.0,251.2 567.5,253.2 576.0,252.5 595.0,255.0 605.0,255.0 610.0,254.2 625.0,256.2 638.7,257.5 647.5,261.7 660.0,265.3 675.0,267.5 690.0,270.7 705.0,273.0 720.0,274.5 735.0,276.2 747.5,274.5 760.0,275.0 777.5,274.2 787.5,276.2 802.5,275.0 812.5,272.5 822.5,268.7 835.0,266.2 845.0,263.0 852.5,258.7 865.0,253.0 877.5,248.7 890.0,245.0 900.0,242.5 912.5,238.7 925.0,234.5 935.0,232.5 947.5,228.0 960.0,223.9 969.0,220.4 975.8,221.3 984.8,217.4 996.0,211.8 1009.5,205.0 1025.3,197.8 1036.6,194.9 1050.0,192.2 1063.6,188.2 1079.4,184.3 1095.0,181.4 1113.0,176.2 1129.0,173.5 1144.7,170.8 1158.0,170.8 1165.0,173.0 1180.7,174.0 1196.5,176.9 1207.7,178.0 1219.0,180.3 1234.0,181.4" stroke="#ff0000"/>
<polyline points="72.0,469.2 78.7,472.5 86.2,480.5 93.7,481.7 107.5,487.5 120.0,489.2 135.0,493.0 142.5,491.2 150.0,493.0 157.5,493.2 165.0,497.0 177.5,497.5 185.0,499.2 191.2,497.5 200.0,500.0 212.5,504.5 220.0,505.5 233.7,502.5 240.0,503.7 250.0,503.2 267.5,501.2 282.5,502.5 288.7,504.5 296.2,500.0 303.7,503.7 315.0,501.7 337.5,501.2 345.0,499.2 360.0,499.2 373.7,499.2 385.0,503.7 392.5,505.5 400.0,503.7 411.2,503.2 417.5,501.2 428.7,496.2 437.5,496.2 442.5,497.5 451.2,493.2 457.5,492.0 463.7,493.2 480.0,492.0 490.0,490.0 500.0,489.2 510.0,485.0 520.0,481.2 537.5,481.2 545.0,478.7 555.0,472.0 570.0,472.0 575.0,473.2 582.5,473.2 592.5,470.7 610.0,470.0 622.5,467.5 632.5,466.2 638.7,468.2 646.2,464.2 651.2,465.5 660.0,465.5 677.5,465.5 682.5,466.7 695.0,463.0 705.0,463.0 725.0,460.0 737.5,456.2 745.0,457.5 760.0,455.5 772.5,452.5 781.2,452.0 787.5,448.7 792.5,450.0 810.0,450.0 817.5,448.7 822.5,450.5 830.0,448.0 840.0,444.5 850.0,444.5 857.5,445.7 867.5,443.7 890.0,442.5 900.0,438.7 917.5,435.5 927.5,431.2 942.5,428.0 960.0,424.4 969.0,423.6 975.8,419.1 989.3,416.9 1005.0,415.8 1023.0,410.8 1032.0,405.2 1045.6,396.2 1056.8,389.9 1072.6,378.6 1092.9,362.8 1104.1,357.2 1115.4,349.3 1126.7,341.0 1137.9,332.4 1146.9,327.3 1165.0,311.0 1180.7,303.2 1198.7,289.6 1214.5,279.4 1223.5,273.7 1234.0,268.1" stroke="#ff0000"/>
<polyline points="72.0,268.0 85.0,269.5 97.5,272.5 107.5,273.7 120.0,276.2 132.5,277.5 145.0,278.7 156.0,280.5 170.0,281.2 182.5,283.7 190.0,285.5 200.0,285.7 205.0,286.7 210.0,285.7 235.0,285.7 257.5,284.2 272.5,283.0 281.0,281.2 289.0,279.5 295.0,280.5 302.5,278.7 312.5,277.0 322.5,275.0 335.0,273.2 347.5,273.0 360.0,273.5 375.0,275.0 390.0,275.5 397.5,277.5 405.0,280.5 417.5,283.7 432.5,287.0 452.5,287.5 467.5,288.7 490.0,292.5 510.0,293.2 535.0,293.2 542.5,292.5 560.0,296.2 580.0,296.7 595.0,298.2 602.5,297.5 627.5,297.5 637.5,299.2 647.5,302.5 660.0,304.0 672.5,306.2 685.0,308.0 700.0,310.0 715.0,311.2 752.5,311.2 777.5,310.0 787.5,311.2 805.0,310.0 815.0,308.0 825.0,304.5 840.0,301.2 852.5,296.2 865.0,292.5 877.5,287.5 890.0,283.7 905.0,279.5 920.0,275.0 935.0,270.5 950.0,266.2 960.0,263.7 971.3,261.4 982.5,258.0 993.8,253.5 1005.0,248.5 1018.6,242.2 1032.0,236.6 1050.0,232.0 1068.0,226.4 1086.0,220.4 1104.0,214.7 1117.7,210.7 1129.0,206.2 1140.0,203.9 1153.7,200.5 1174.0,200.0 1185.0,199.4 1207.7,199.4 1234.0,198.7" stroke="#0000ff"/>
<polyline points="72.0,400.0 78.7,403.7 85.0,408.0 97.5,410.5 107.5,414.5 120.0,416.2 132.5,419.2 140.0,418.2 147.5,420.0 157.5,420.7 167.5,423.2 180.0,424.2 192.5,425.7 207.5,428.7 218.7,430.5 230.0,428.7 250.0,428.0 267.5,427.5 290.0,427.0 296.2,425.5 302.5,426.7 315.0,424.5 332.5,423.7 345.0,421.2 355.0,421.7 360.0,422.5 376.2,422.5 385.0,425.7 392.5,427.5 400.0,426.2 407.5,427.5 417.5,427.5 430.0,424.2 437.5,424.2 442.5,425.7 450.0,423.2 487.5,423.0 500.0,422.0 510.0,419.2 520.0,417.0 535.0,417.0 545.0,415.0 555.0,412.5 570.0,412.5 575.0,413.7 585.0,413.2 595.0,411.7 612.5,411.2 622.5,409.5 633.7,409.2 637.5,410.5 645.0,409.2 651.2,410.5 660.0,410.5 670.0,410.7 678.7,412.5 690.0,412.5 700.0,410.7 717.5,410.0 735.0,407.5 752.5,407.0 767.5,405.0 785.0,402.5 810.0,402.0 827.5,399.5 837.5,396.2 855.0,393.7 872.5,391.2 890.0,388.7 900.0,385.0 920.0,380.5 930.0,376.7 942.5,374.2 955.0,370.5 960.0,369.6 967.9,368.5 975.8,364.0 989.3,361.7 1007.3,358.8 1016.3,354.5 1025.3,352.2 1045.6,340.3 1065.9,330.2 1072.6,325.7 1086.1,318.9 1092.9,313.3 1113.2,302.0 1131.2,293.5 1137.9,288.5 1153.7,279.4 1169.5,270.4 1180.7,268.1 1198.7,258.6 1207.7,255.7 1221.3,249.0 1234.0,243.8" stroke="#0000ff"/>
<polyline points="71.9,324.3 82.0,327.4 93.9,330.8 110.8,334.2 127.8,335.8 144.7,339.2 161.7,341.4 178.6,343.1 195.6,345.2 209.2,347.2 215.9,346.9 229.5,346.0 246.4,345.7 260.0,345.6 277.0,344.3 293.9,342.6 310.8,340.1 327.8,338.1 344.7,336.2 354.9,335.8 370.2,337.2 383.7,338.9 395.6,340.9 407.5,343.5 419.3,345.2 439.7,345.2 454.9,346.0 473.6,346.4 477.0,347.4 515.9,347.4 519.3,346.0 536.3,345.7 539.7,345.2 565.0,345.2 568.5,346.0 605.8,346.4 609.2,345.2 641.4,345.5 646.4,346.9 651.5,348.6 660.0,350.5 677.0,352.1 693.9,353.0 727.8,352.6 754.9,352.1 768.5,350.4 785.4,349.6 804.0,348.4 821.0,345.8 838.0,342.1 854.9,337.4 870.0,332.8 921.2,319.5 935.0,315.5 950.0,311.7 960.0,308.8 982.5,302.0 1002.8,296.8 1020.8,288.5 1038.8,280.6 1061.4,271.5 1079.4,263.6 1095.0,256.8 1113.0,249.0 1131.0,242.2 1151.4,234.3 1162.7,231.6 1185.0,227.1 1207.7,223.0 1234.0,217.4" stroke="#000"/>
<polyline points="72.2,650.4 78.6,649.1 87.1,649.4 97.3,651.6 107.5,654.5 117.6,657.2 127.8,658.9 136.3,659.6 144.7,660.6 151.5,663.5 158.3,666.4 165.1,669.1 175.3,671.6 182.0,673.6 188.8,675.0 199.0,675.3 204.0,676.2 212.5,676.2 222.7,674.5 231.2,672.5 239.7,670.3 249.8,668.6 260.0,667.3 270.2,665.2 280.3,663.5 290.5,662.1 299.0,657.5 309.2,653.3 319.3,648.7 331.2,645.3 343.0,643.5 351.5,643.6 361.7,644.3 375.3,646.5 385.4,650.8 395.6,655.5 405.8,659.6 415.9,663.5 426.1,666.4 436.3,669.1 441.4,670.3 473.6,670.3 482.0,671.4 493.9,671.6 509.2,670.8 519.3,669.1 531.2,666.9 544.7,665.2 554.9,664.7 565.1,663.5 575.3,663.5 585.4,663.1 595.6,660.9 604.1,659.6 612.5,657.9 622.7,655.3 632.9,655.3 643.0,655.5 649.8,657.0 660.0,657.5 668.5,658.4 675.3,659.6 687.1,659.6 697.3,658.9 709.2,657.5 719.3,656.7 727.8,655.8 748.1,656.2 761.7,655.3 778.6,654.5 795.6,654.2 804.1,652.8 812.5,650.8 821.0,646.5 829.5,642.6 838.0,638.1 846.4,633.8 854.9,628.7 863.4,624.0 870.2,620.3 882.0,617.2 893.9,614.3 909.2,613.5 934.6,613.1 944.7,615.2 958.3,616.5 970.2,619.4 982.0,622.8 995.6,626.2 1004.0,627.4 1017.6,627.0 1027.8,624.0 1042.6,620.3 1057.8,616.5 1071.4,615.2 1084.9,615.5 1096.8,616.5 1110.4,618.6 1123.9,621.4 1137.5,624.2 1151.0,627.0 1164.6,629.9 1178.2,633.0 1191.7,635.5 1205.3,638.1 1218.8,640.6 1234.0,643.6" stroke="#0000ff"/>
<polyline points="72.2,639.7 77.0,641.4 81.2,644.8 85.4,649.9 93.9,656.7 100.7,659.6 107.5,662.1 114.2,660.9 121.0,660.9 127.8,663.0 134.6,664.3 139.7,664.7 144.7,668.1 149.8,672.3 156.6,674.5 163.4,678.7 171.9,679.6 180.0,681.0 200.0,681.0 207.5,679.6 213.4,675.3 219.3,671.1 226.1,667.4 232.9,664.0 239.7,663.1 260.0,663.1 268.5,661.4 277.0,660.6 283.7,658.4 288.8,654.2 295.6,650.4 302.4,644.8 309.2,639.7 316.8,636.4 322.7,637.2 334.6,637.5 344.7,639.2 351.5,644.0 361.7,647.4 370.2,651.1 378.6,655.5 387.1,663.5 395.6,667.7 402.4,670.3 412.5,671.6 421.0,673.6 429.5,675.3 436.3,676.2 443.0,672.8 451.5,671.1 456.6,669.4 466.8,669.7 473.6,671.4 482.0,673.3 488.8,673.3 495.6,672.3 507.5,670.3 515.9,666.9 527.8,664.0 539.7,662.3 558.3,662.3 561.7,661.3 568.5,662.6 576.9,662.6 585.4,660.1 595.6,657.5 604.1,654.2 610.8,651.1 617.6,649.9 624.4,650.8 631.2,653.6 639.7,656.7 646.4,659.2 654.9,660.1 663.4,661.3 670.2,661.8 678.6,660.9 688.8,658.9 695.6,656.7 702.4,655.3 712.5,655.0 721.0,653.3 727.8,655.0 732.9,655.8 748.1,655.8 756.6,653.8 768.5,654.2 782.0,653.8 788.8,654.2 800.7,651.6 809.2,647.4 815.9,641.4 821.0,635.5 827.8,628.7 834.6,624.0 841.4,619.4 848.1,616.9 854.9,612.6 861.7,609.2 868.5,607.2 873.6,608.1 883.7,611.8 890.5,610.4 900.7,610.6 909.2,612.6 919.3,614.3 926.1,613.1 934.6,613.1 943.0,615.5 954.9,617.7 965.1,622.8 975.3,628.7 985.4,633.5 995.6,634.7 1004.0,631.3 1012.5,627.9 1021.0,621.1 1029.5,616.0 1040.9,612.6 1051.0,611.3 1056.1,611.4 1069.7,612.6 1079.8,615.2 1090.0,616.5 1103.6,620.6 1117.1,624.5 1130.7,627.9 1144.3,631.8 1157.8,634.7 1171.4,637.5 1184.9,640.6 1198.5,642.6 1212.0,644.8 1225.6,646.5 1234.0,647.7" stroke="#000"/>
<polyline points="1025.5,199.5 1044.5,204.5" stroke="#0000ff"/>
<polyline points="163.5,386.5 183,381.5" stroke="#0000ff"/>
</g>
<text x="1044.3" y="215" font-size="11.2" fill="#0000ff" textLength="58.5" lengthAdjust="spacingAndGlyphs">2327.5601</text>
<text x="184.3" y="384" font-size="11.2" fill="#0000ff" textLength="58" lengthAdjust="spacingAndGlyphs">1974.3800</text>
<text x="13.0 19.0 25.0 31.0 37.6 43.0 49.0 55.0 61.0" y="522" font-size="12" font-family="Liberation Serif, serif" fill="#2a2a2a">1714.1408</text>
<text x="13.0 19.0 25.0 31.0 37.0 43.0 49.0 55.0 61.0" y="545.7" font-size="12" font-family="Liberation Serif, serif" fill="#2a2a2a">171771468</text>
<text x="13.0 19.0 25.0 31.0 37.0 43.0 49.0 55.0 61.0" y="561.7" font-size="12" font-family="Liberation Serif, serif" fill="#2a2a2a">114514312</text>
<text x="19.0 25.0 31.0 37.0 43.0 49.0 55.0 61.0" y="577.8" font-size="12" font-family="Liberation Serif, serif" fill="#2a2a2a">57257156</text>
<text x="37.0 43.0 49.6 55.0 61.0" y="615.8" font-size="12" font-family="Liberation Serif, serif" fill="#2a2a2a">39.56</text>
<text x="37.0 43.0 49.6 55.0 61.0" y="633.8" font-size="12" font-family="Liberation Serif, serif" fill="#2a2a2a">24.28</text>
<text x="43.0 49.6 55.0 61.0" y="651.8" font-size="12" font-family="Liberation Serif, serif" fill="#2a2a2a">9.00</text>
<text x="38.0 43.0 49.6 55.0 61.0" y="669.8" font-size="12" font-family="Liberation Serif, serif" fill="#2a2a2a">-6.28</text>
<text x="2" y="604" font-size="13" font-family="Liberation Serif, serif" fill="#0000ff" textLength="27" lengthAdjust="spacingAndGlyphs">MACD</text>
<text x="74.4" y="603.8" font-size="11.6" fill="#000" textLength="52.4" lengthAdjust="spacingAndGlyphs">DIF=-18.69</text>
<text x="145.4" y="603.8" font-size="11.6" fill="#0000ff" textLength="57.6" lengthAdjust="spacingAndGlyphs">DEA=-11.42</text>
<text x="217" y="603.8" font-size="11.6" fill="#ff00ff" textLength="66" lengthAdjust="spacingAndGlyphs">MACD=-14.55</text>
</svg></body></html>
